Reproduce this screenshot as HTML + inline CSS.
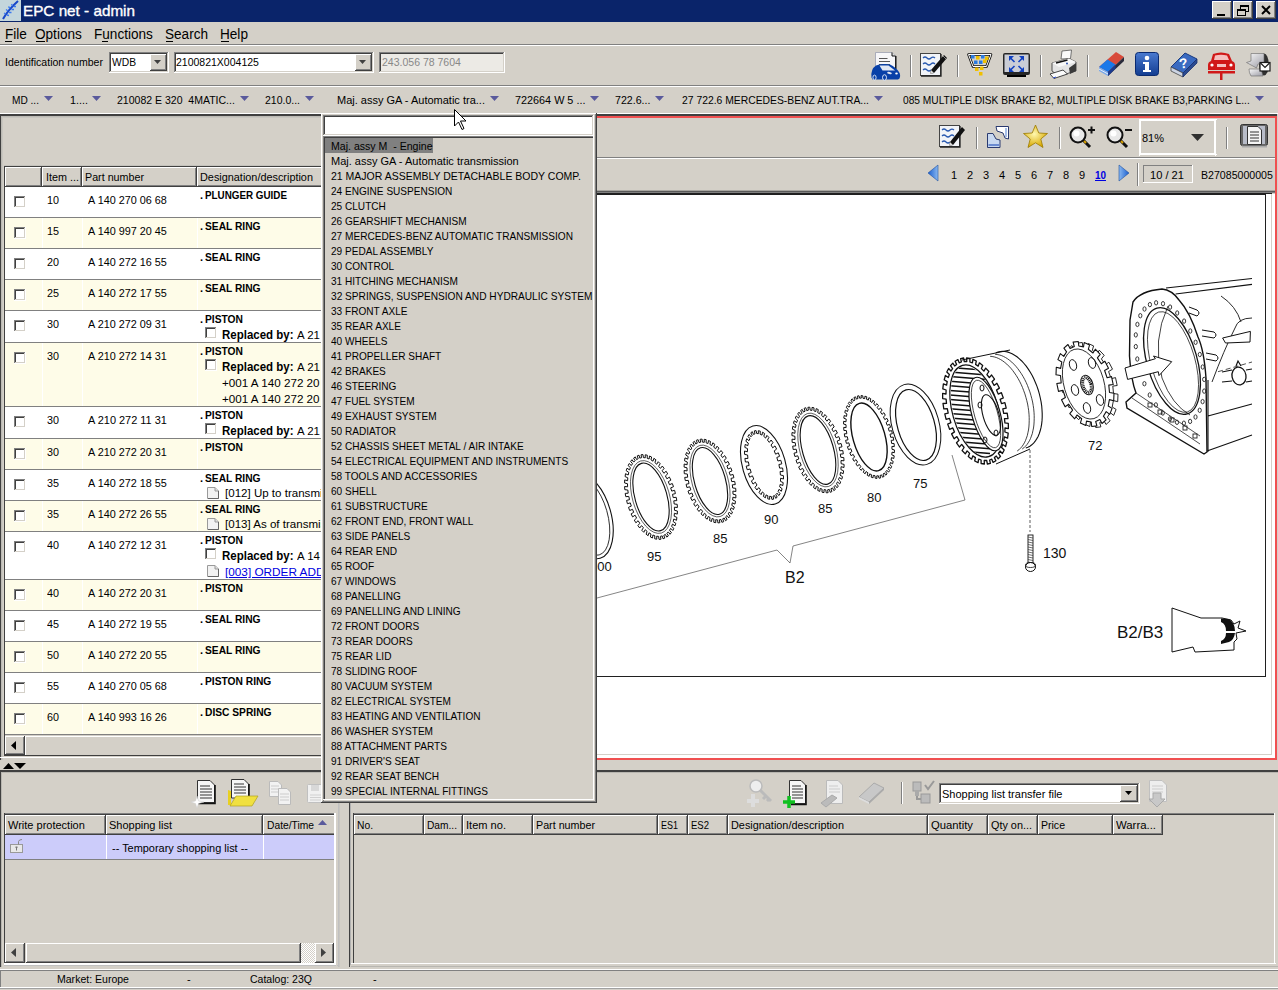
<!DOCTYPE html>
<html><head><meta charset="utf-8"><title>EPC net - admin</title>
<style>
*{box-sizing:border-box;margin:0;padding:0}
html,body{width:1278px;height:990px;overflow:hidden;background:#d4d0c8;font-family:"Liberation Sans",sans-serif;font-size:11px;color:#000;position:relative}
.a{position:absolute}
.t{position:absolute;white-space:pre;line-height:1;transform-origin:0 0}
svg.a{overflow:visible}
</style></head><body>
<div class="a" style="left:0px;top:0px;width:1278px;height:22px;background:#0a246a;"></div>
<div class="a" style="left:0px;top:0px;width:21px;height:21px;background:#c4d6dc;"></div>
<svg class="a" style="left:0px;top:0px;" width="21" height="21" viewBox="0 0 21 21"><path d="M3 19 Q8 10 18 1" stroke="#1848c8" stroke-width="2" fill="none"/><path d="M6 14 l-2 -1 M8 11 l-2 -1.5 M10 8.5 l-1.5 -2 M12.5 6 l-1 -2 M7 15 l2 0.5 M9 12.5 l2.5 0 M11.5 9.5 l2.5 0 M14 6.5 l2 0" stroke="#3a78f0" stroke-width="1.3"/></svg>
<div class="t" style="left:23px;top:3px;font-size:15px;color:#fff;transform:scaleX(1.0176);-webkit-text-stroke:0.35px #fff;">EPC net - admin</div>
<div class="a" style="left:1212px;top:1px;width:20px;height:18px;background:#d4d0c8;"></div>
<div class="a" style="left:1212px;top:1px;width:20px;height:1px;background:#fff;"></div>
<div class="a" style="left:1212px;top:1px;width:1px;height:18px;background:#fff;"></div>
<div class="a" style="left:1212px;top:18px;width:20px;height:1px;background:#404040;"></div>
<div class="a" style="left:1231px;top:1px;width:1px;height:18px;background:#404040;"></div>
<div class="a" style="left:1213px;top:17px;width:18px;height:1px;background:#808080;"></div>
<div class="a" style="left:1230px;top:2px;width:1px;height:16px;background:#808080;"></div>
<div class="a" style="left:1213px;top:2px;width:0px;height:1px;background:#fff;"></div>
<div class="a" style="left:1233px;top:1px;width:20px;height:18px;background:#d4d0c8;"></div>
<div class="a" style="left:1233px;top:1px;width:20px;height:1px;background:#fff;"></div>
<div class="a" style="left:1233px;top:1px;width:1px;height:18px;background:#fff;"></div>
<div class="a" style="left:1233px;top:18px;width:20px;height:1px;background:#404040;"></div>
<div class="a" style="left:1252px;top:1px;width:1px;height:18px;background:#404040;"></div>
<div class="a" style="left:1234px;top:17px;width:18px;height:1px;background:#808080;"></div>
<div class="a" style="left:1251px;top:2px;width:1px;height:16px;background:#808080;"></div>
<div class="a" style="left:1234px;top:2px;width:0px;height:1px;background:#fff;"></div>
<div class="a" style="left:1256px;top:1px;width:20px;height:18px;background:#d4d0c8;"></div>
<div class="a" style="left:1256px;top:1px;width:20px;height:1px;background:#fff;"></div>
<div class="a" style="left:1256px;top:1px;width:1px;height:18px;background:#fff;"></div>
<div class="a" style="left:1256px;top:18px;width:20px;height:1px;background:#404040;"></div>
<div class="a" style="left:1275px;top:1px;width:1px;height:18px;background:#404040;"></div>
<div class="a" style="left:1257px;top:17px;width:18px;height:1px;background:#808080;"></div>
<div class="a" style="left:1274px;top:2px;width:1px;height:16px;background:#808080;"></div>
<div class="a" style="left:1257px;top:2px;width:0px;height:1px;background:#fff;"></div>
<svg class="a" style="left:1212px;top:1px;" width="20" height="18" viewBox="0 0 20 18"><rect x="5" y="13" width="8" height="2" fill="#000"/></svg>
<svg class="a" style="left:1233px;top:1px;" width="20" height="18" viewBox="0 0 20 18"><rect x="7.5" y="4.5" width="8" height="6" fill="none" stroke="#000"/><rect x="7" y="4" width="9" height="2" fill="#000"/><rect x="4.5" y="8.5" width="8" height="6" fill="#d4d0c8" stroke="#000"/><rect x="4" y="8" width="9" height="2" fill="#000"/></svg>
<svg class="a" style="left:1256px;top:1px;" width="20" height="18" viewBox="0 0 20 18"><path d="M6 5 L14 13 M14 5 L6 13" stroke="#000" stroke-width="2"/></svg>
<div class="t" style="left:5px;top:27px;font-size:14px;color:#000;transform:scaleX(0.9700);">File</div>
<div class="t" style="left:35px;top:27px;font-size:14px;color:#000;transform:scaleX(0.9700);">Options</div>
<div class="t" style="left:94px;top:27px;font-size:14px;color:#000;transform:scaleX(0.9700);">Functions</div>
<div class="t" style="left:165px;top:27px;font-size:14px;color:#000;transform:scaleX(0.9700);">Search</div>
<div class="t" style="left:220px;top:27px;font-size:14px;color:#000;transform:scaleX(0.9700);">Help</div>
<div class="a" style="left:5px;top:41px;width:7px;height:1px;background:#000;"></div>
<div class="a" style="left:36px;top:41px;width:9px;height:1px;background:#000;"></div>
<div class="a" style="left:102px;top:41px;width:6px;height:1px;background:#000;"></div>
<div class="a" style="left:166px;top:41px;width:7px;height:1px;background:#000;"></div>
<div class="a" style="left:221px;top:41px;width:8px;height:1px;background:#000;"></div>
<div class="a" style="left:0px;top:44px;width:1278px;height:1px;background:#808080;"></div>
<div class="a" style="left:0px;top:45px;width:1278px;height:1px;background:#fff;"></div>
<div class="t" style="left:5px;top:57px;font-size:11px;color:#000;transform:scaleX(0.9590);">Identification number</div>
<div class="a" style="left:109px;top:52px;width:60px;height:21px;background:#fff;"></div>
<div class="a" style="left:109px;top:52px;width:60px;height:1px;background:#808080;"></div>
<div class="a" style="left:109px;top:52px;width:1px;height:21px;background:#808080;"></div>
<div class="a" style="left:109px;top:72px;width:60px;height:1px;background:#fff;"></div>
<div class="a" style="left:168px;top:52px;width:1px;height:21px;background:#fff;"></div>
<div class="a" style="left:110px;top:53px;width:58px;height:1px;background:#404040;"></div>
<div class="a" style="left:110px;top:53px;width:1px;height:19px;background:#404040;"></div>
<div class="a" style="left:110px;top:71px;width:58px;height:1px;background:#d4d0c8;"></div>
<div class="a" style="left:167px;top:53px;width:1px;height:19px;background:#d4d0c8;"></div>
<div class="t" style="left:112px;top:57px;font-size:11px;color:#000;transform:scaleX(0.9354);">WDB</div>
<div class="a" style="left:150px;top:54px;width:17px;height:17px;background:#d4d0c8;"></div>
<div class="a" style="left:150px;top:54px;width:17px;height:1px;background:#fff;"></div>
<div class="a" style="left:150px;top:54px;width:1px;height:17px;background:#fff;"></div>
<div class="a" style="left:150px;top:70px;width:17px;height:1px;background:#404040;"></div>
<div class="a" style="left:166px;top:54px;width:1px;height:17px;background:#404040;"></div>
<div class="a" style="left:151px;top:69px;width:15px;height:1px;background:#808080;"></div>
<div class="a" style="left:165px;top:55px;width:1px;height:15px;background:#808080;"></div>
<svg class="a" style="left:154px;top:60px;" width="7" height="4" viewBox="0 0 7 4"><polygon points="0,0 7,0 3.5,4" fill="#404040"/></svg>
<div class="a" style="left:174px;top:52px;width:200px;height:21px;background:#fff;"></div>
<div class="a" style="left:174px;top:52px;width:200px;height:1px;background:#808080;"></div>
<div class="a" style="left:174px;top:52px;width:1px;height:21px;background:#808080;"></div>
<div class="a" style="left:174px;top:72px;width:200px;height:1px;background:#fff;"></div>
<div class="a" style="left:373px;top:52px;width:1px;height:21px;background:#fff;"></div>
<div class="a" style="left:175px;top:53px;width:198px;height:1px;background:#404040;"></div>
<div class="a" style="left:175px;top:53px;width:1px;height:19px;background:#404040;"></div>
<div class="a" style="left:175px;top:71px;width:198px;height:1px;background:#d4d0c8;"></div>
<div class="a" style="left:372px;top:53px;width:1px;height:19px;background:#d4d0c8;"></div>
<div class="t" style="left:176px;top:57px;font-size:11px;color:#000;transform:scaleX(0.9544);">2100821X004125</div>
<div class="a" style="left:355px;top:54px;width:17px;height:17px;background:#d4d0c8;"></div>
<div class="a" style="left:355px;top:54px;width:17px;height:1px;background:#fff;"></div>
<div class="a" style="left:355px;top:54px;width:1px;height:17px;background:#fff;"></div>
<div class="a" style="left:355px;top:70px;width:17px;height:1px;background:#404040;"></div>
<div class="a" style="left:371px;top:54px;width:1px;height:17px;background:#404040;"></div>
<div class="a" style="left:356px;top:69px;width:15px;height:1px;background:#808080;"></div>
<div class="a" style="left:370px;top:55px;width:1px;height:15px;background:#808080;"></div>
<svg class="a" style="left:359px;top:60px;" width="7" height="4" viewBox="0 0 7 4"><polygon points="0,0 7,0 3.5,4" fill="#404040"/></svg>
<div class="a" style="left:379px;top:52px;width:126px;height:21px;background:#eceae5;"></div>
<div class="a" style="left:379px;top:52px;width:126px;height:1px;background:#808080;"></div>
<div class="a" style="left:379px;top:52px;width:1px;height:21px;background:#808080;"></div>
<div class="a" style="left:379px;top:72px;width:126px;height:1px;background:#fff;"></div>
<div class="a" style="left:504px;top:52px;width:1px;height:21px;background:#fff;"></div>
<div class="a" style="left:380px;top:53px;width:124px;height:1px;background:#404040;"></div>
<div class="a" style="left:380px;top:53px;width:1px;height:19px;background:#404040;"></div>
<div class="a" style="left:380px;top:71px;width:124px;height:1px;background:#d4d0c8;"></div>
<div class="a" style="left:503px;top:53px;width:1px;height:19px;background:#d4d0c8;"></div>
<div class="t" style="left:382px;top:57px;font-size:11px;color:#888;transform:scaleX(0.9554);">243.056 78 7604</div>
<div class="a" style="left:0px;top:85px;width:1278px;height:1px;background:#808080;"></div>
<div class="a" style="left:0px;top:86px;width:1278px;height:1px;background:#fff;"></div>
<div class="a" style="left:910px;top:55px;width:1px;height:22px;background:#808080;"></div>
<div class="a" style="left:911px;top:55px;width:1px;height:22px;background:#fff;"></div>
<div class="a" style="left:957px;top:55px;width:1px;height:22px;background:#808080;"></div>
<div class="a" style="left:958px;top:55px;width:1px;height:22px;background:#fff;"></div>
<div class="a" style="left:1040px;top:55px;width:1px;height:22px;background:#808080;"></div>
<div class="a" style="left:1041px;top:55px;width:1px;height:22px;background:#fff;"></div>
<div class="a" style="left:1087px;top:55px;width:1px;height:22px;background:#808080;"></div>
<div class="a" style="left:1088px;top:55px;width:1px;height:22px;background:#fff;"></div>
<div class="t" style="left:12px;top:95px;font-size:11px;color:#000;transform:scaleX(0.9201);">MD ...</div>
<svg class="a" style="left:44px;top:96px;" width="9" height="5" viewBox="0 0 9 5"><polygon points="0,0 9,0 4.5,5" fill="#5a5a9c"/></svg>
<div class="t" style="left:70px;top:95px;font-size:11px;color:#000;transform:scaleX(0.9796);">1....</div>
<svg class="a" style="left:92px;top:96px;" width="9" height="5" viewBox="0 0 9 5"><polygon points="0,0 9,0 4.5,5" fill="#5a5a9c"/></svg>
<div class="t" style="left:117px;top:95px;font-size:11px;color:#000;transform:scaleX(0.9559);">210082 E 320  4MATIC...</div>
<svg class="a" style="left:240px;top:96px;" width="9" height="5" viewBox="0 0 9 5"><polygon points="0,0 9,0 4.5,5" fill="#5a5a9c"/></svg>
<div class="t" style="left:265px;top:95px;font-size:11px;color:#000;transform:scaleX(0.9524);">210.0...</div>
<svg class="a" style="left:305px;top:96px;" width="9" height="5" viewBox="0 0 9 5"><polygon points="0,0 9,0 4.5,5" fill="#5a5a9c"/></svg>
<div class="t" style="left:337px;top:95px;font-size:11px;color:#000;">Maj. assy GA - Automatic tra...</div>
<svg class="a" style="left:490px;top:96px;" width="9" height="5" viewBox="0 0 9 5"><polygon points="0,0 9,0 4.5,5" fill="#5a5a9c"/></svg>
<div class="t" style="left:515px;top:95px;font-size:11px;color:#000;transform:scaleX(0.9843);">722664 W 5 ...</div>
<svg class="a" style="left:590px;top:96px;" width="9" height="5" viewBox="0 0 9 5"><polygon points="0,0 9,0 4.5,5" fill="#5a5a9c"/></svg>
<div class="t" style="left:615px;top:95px;font-size:11px;color:#000;transform:scaleX(0.9660);">722.6...</div>
<svg class="a" style="left:655px;top:96px;" width="9" height="5" viewBox="0 0 9 5"><polygon points="0,0 9,0 4.5,5" fill="#5a5a9c"/></svg>
<div class="t" style="left:682px;top:95px;font-size:11px;color:#000;transform:scaleX(0.9408);">27 722.6 MERCEDES-BENZ AUT.TRA...</div>
<svg class="a" style="left:874px;top:96px;" width="9" height="5" viewBox="0 0 9 5"><polygon points="0,0 9,0 4.5,5" fill="#5a5a9c"/></svg>
<div class="t" style="left:903px;top:95px;font-size:11px;color:#000;transform:scaleX(0.9253);">085 MULTIPLE DISK BRAKE B2, MULTIPLE DISK BRAKE B3,PARKING L...</div>
<svg class="a" style="left:1255px;top:96px;" width="9" height="5" viewBox="0 0 9 5"><polygon points="0,0 9,0 4.5,5" fill="#5a5a9c"/></svg>
<div class="a" style="left:0px;top:113px;width:1278px;height:1px;background:#fff;"></div>
<div class="a" style="left:0px;top:969px;width:1278px;height:1px;background:#fff;"></div>
<div class="a" style="left:0px;top:970px;width:1278px;height:1px;background:#808080;"></div>
<div class="a" style="left:0px;top:971px;width:1px;height:16px;background:#808080;"></div>
<div class="a" style="left:0px;top:987px;width:1278px;height:1px;background:#fff;"></div>
<div class="a" style="left:0px;top:988px;width:1278px;height:1px;background:#a0a0a0;"></div>
<div class="t" style="left:57px;top:974px;font-size:11px;color:#000;transform:scaleX(0.9568);">Market: Europe</div>
<div class="t" style="left:187px;top:974px;font-size:11px;color:#000;">-</div>
<div class="t" style="left:250px;top:974px;font-size:11px;color:#000;transform:scaleX(0.9557);">Catalog: 23Q</div>
<div class="t" style="left:373px;top:974px;font-size:11px;color:#000;">-</div>
<div class="a" style="left:0px;top:114px;width:340px;height:1px;background:#404040;"></div>
<div class="a" style="left:0px;top:115px;width:340px;height:1px;background:#404040;"></div>
<div class="a" style="left:1px;top:116px;width:339px;height:1px;background:#bcbab4;"></div>
<div class="a" style="left:2px;top:117px;width:338px;height:1px;background:#c8c6c0;"></div>
<div class="a" style="left:0px;top:114px;width:1px;height:646px;background:#404040;"></div>
<div class="a" style="left:1px;top:116px;width:1px;height:644px;background:#bcbab4;"></div>
<div class="a" style="left:2px;top:117px;width:1px;height:643px;background:#c8c6c0;"></div>
<div class="a" style="left:4px;top:166px;width:330px;height:590px;background:#d4d0c8;"></div>
<div class="a" style="left:4px;top:165px;width:330px;height:1px;background:#c4c2bc;"></div>
<div class="a" style="left:4px;top:166px;width:330px;height:1px;background:#404040;"></div>
<div class="a" style="left:4px;top:166px;width:1px;height:590px;background:#404040;"></div>
<div class="a" style="left:5px;top:167px;width:37px;height:20px;background:#d4d0c8;"></div>
<div class="a" style="left:5px;top:167px;width:37px;height:1px;background:#fff;"></div>
<div class="a" style="left:5px;top:167px;width:1px;height:20px;background:#fff;"></div>
<div class="a" style="left:5px;top:186px;width:37px;height:1px;background:#404040;"></div>
<div class="a" style="left:41px;top:167px;width:1px;height:20px;background:#404040;"></div>
<div class="a" style="left:6px;top:185px;width:35px;height:1px;background:#808080;"></div>
<div class="a" style="left:40px;top:168px;width:1px;height:18px;background:#808080;"></div>
<div class="a" style="left:42px;top:167px;width:40px;height:20px;background:#d4d0c8;"></div>
<div class="a" style="left:42px;top:167px;width:40px;height:1px;background:#fff;"></div>
<div class="a" style="left:42px;top:167px;width:1px;height:20px;background:#fff;"></div>
<div class="a" style="left:42px;top:186px;width:40px;height:1px;background:#404040;"></div>
<div class="a" style="left:81px;top:167px;width:1px;height:20px;background:#404040;"></div>
<div class="a" style="left:43px;top:185px;width:38px;height:1px;background:#808080;"></div>
<div class="a" style="left:80px;top:168px;width:1px;height:18px;background:#808080;"></div>
<div class="a" style="left:43px;top:167px;width:37px;height:20px;overflow:hidden">
<div class="t" style="left:3px;top:5px;font-size:11px;color:#000;transform:scaleX(0.9805);">Item ...</div>
</div>
<div class="a" style="left:82px;top:167px;width:115px;height:20px;background:#d4d0c8;"></div>
<div class="a" style="left:82px;top:167px;width:115px;height:1px;background:#fff;"></div>
<div class="a" style="left:82px;top:167px;width:1px;height:20px;background:#fff;"></div>
<div class="a" style="left:82px;top:186px;width:115px;height:1px;background:#404040;"></div>
<div class="a" style="left:196px;top:167px;width:1px;height:20px;background:#404040;"></div>
<div class="a" style="left:83px;top:185px;width:113px;height:1px;background:#808080;"></div>
<div class="a" style="left:195px;top:168px;width:1px;height:18px;background:#808080;"></div>
<div class="a" style="left:83px;top:167px;width:112px;height:20px;overflow:hidden">
<div class="t" style="left:2px;top:5px;font-size:11px;color:#000;transform:scaleX(0.9742);">Part number</div>
</div>
<div class="a" style="left:197px;top:167px;width:140px;height:20px;background:#d4d0c8;"></div>
<div class="a" style="left:197px;top:167px;width:140px;height:1px;background:#fff;"></div>
<div class="a" style="left:197px;top:167px;width:1px;height:20px;background:#fff;"></div>
<div class="a" style="left:197px;top:186px;width:140px;height:1px;background:#404040;"></div>
<div class="a" style="left:336px;top:167px;width:1px;height:20px;background:#404040;"></div>
<div class="a" style="left:198px;top:185px;width:138px;height:1px;background:#808080;"></div>
<div class="a" style="left:335px;top:168px;width:1px;height:18px;background:#808080;"></div>
<div class="a" style="left:198px;top:167px;width:137px;height:20px;overflow:hidden">
<div class="t" style="left:2px;top:5px;font-size:11px;color:#000;transform:scaleX(0.9877);">Designation/description</div>
</div>
<div class="a" style="left:5px;top:187px;width:330px;height:30px;background:#fff;overflow:hidden"></div>
<div class="a" style="left:5px;top:217px;width:330px;height:1px;background:#808080;"></div>
<div class="a" style="left:14px;top:196px;width:12px;height:12px;background:#fff;"></div>
<div class="a" style="left:14px;top:196px;width:12px;height:1px;background:#808080;"></div>
<div class="a" style="left:14px;top:196px;width:1px;height:12px;background:#808080;"></div>
<div class="a" style="left:15px;top:197px;width:10px;height:1px;background:#404040;"></div>
<div class="a" style="left:15px;top:197px;width:1px;height:10px;background:#404040;"></div>
<div class="a" style="left:14px;top:207px;width:12px;height:1px;background:#fff;"></div>
<div class="a" style="left:25px;top:196px;width:1px;height:12px;background:#fff;"></div>
<div class="a" style="left:15px;top:206px;width:10px;height:1px;background:#d4d0c8;"></div>
<div class="a" style="left:24px;top:197px;width:1px;height:10px;background:#d4d0c8;"></div>
<div class="t" style="left:47px;top:195px;font-size:11px;color:#000;transform:scaleX(0.9796);">10</div>
<div class="t" style="left:88px;top:195px;font-size:11px;color:#000;transform:scaleX(0.9846);">A 140 270 06 68</div>
<div class="t" style="left:200px;top:190px;font-size:11px;font-weight:bold;color:#000;">.</div>
<div class="t" style="left:205px;top:190px;font-size:11px;font-weight:bold;color:#000;transform:scaleX(0.8940);">PLUNGER GUIDE</div>
<div class="a" style="left:5px;top:218px;width:330px;height:30px;background:#fefce8;overflow:hidden"></div>
<div class="a" style="left:42px;top:218px;width:1px;height:30px;background:#fff;"></div>
<div class="a" style="left:82px;top:218px;width:1px;height:30px;background:#fff;"></div>
<div class="a" style="left:197px;top:218px;width:1px;height:30px;background:#fff;"></div>
<div class="a" style="left:5px;top:248px;width:330px;height:1px;background:#808080;"></div>
<div class="a" style="left:14px;top:227px;width:12px;height:12px;background:#fff;"></div>
<div class="a" style="left:14px;top:227px;width:12px;height:1px;background:#808080;"></div>
<div class="a" style="left:14px;top:227px;width:1px;height:12px;background:#808080;"></div>
<div class="a" style="left:15px;top:228px;width:10px;height:1px;background:#404040;"></div>
<div class="a" style="left:15px;top:228px;width:1px;height:10px;background:#404040;"></div>
<div class="a" style="left:14px;top:238px;width:12px;height:1px;background:#fff;"></div>
<div class="a" style="left:25px;top:227px;width:1px;height:12px;background:#fff;"></div>
<div class="a" style="left:15px;top:237px;width:10px;height:1px;background:#d4d0c8;"></div>
<div class="a" style="left:24px;top:228px;width:1px;height:10px;background:#d4d0c8;"></div>
<div class="t" style="left:47px;top:226px;font-size:11px;color:#000;transform:scaleX(0.9796);">15</div>
<div class="t" style="left:88px;top:226px;font-size:11px;color:#000;transform:scaleX(0.9846);">A 140 997 20 45</div>
<div class="t" style="left:200px;top:221px;font-size:11px;font-weight:bold;color:#000;">.</div>
<div class="t" style="left:205px;top:221px;font-size:11px;font-weight:bold;color:#000;transform:scaleX(0.9300);">SEAL RING</div>
<div class="a" style="left:5px;top:249px;width:330px;height:30px;background:#fff;overflow:hidden"></div>
<div class="a" style="left:5px;top:279px;width:330px;height:1px;background:#808080;"></div>
<div class="a" style="left:14px;top:258px;width:12px;height:12px;background:#fff;"></div>
<div class="a" style="left:14px;top:258px;width:12px;height:1px;background:#808080;"></div>
<div class="a" style="left:14px;top:258px;width:1px;height:12px;background:#808080;"></div>
<div class="a" style="left:15px;top:259px;width:10px;height:1px;background:#404040;"></div>
<div class="a" style="left:15px;top:259px;width:1px;height:10px;background:#404040;"></div>
<div class="a" style="left:14px;top:269px;width:12px;height:1px;background:#fff;"></div>
<div class="a" style="left:25px;top:258px;width:1px;height:12px;background:#fff;"></div>
<div class="a" style="left:15px;top:268px;width:10px;height:1px;background:#d4d0c8;"></div>
<div class="a" style="left:24px;top:259px;width:1px;height:10px;background:#d4d0c8;"></div>
<div class="t" style="left:47px;top:257px;font-size:11px;color:#000;transform:scaleX(0.9796);">20</div>
<div class="t" style="left:88px;top:257px;font-size:11px;color:#000;transform:scaleX(0.9846);">A 140 272 16 55</div>
<div class="t" style="left:200px;top:252px;font-size:11px;font-weight:bold;color:#000;">.</div>
<div class="t" style="left:205px;top:252px;font-size:11px;font-weight:bold;color:#000;transform:scaleX(0.9300);">SEAL RING</div>
<div class="a" style="left:5px;top:280px;width:330px;height:30px;background:#fefce8;overflow:hidden"></div>
<div class="a" style="left:42px;top:280px;width:1px;height:30px;background:#fff;"></div>
<div class="a" style="left:82px;top:280px;width:1px;height:30px;background:#fff;"></div>
<div class="a" style="left:197px;top:280px;width:1px;height:30px;background:#fff;"></div>
<div class="a" style="left:5px;top:310px;width:330px;height:1px;background:#808080;"></div>
<div class="a" style="left:14px;top:289px;width:12px;height:12px;background:#fff;"></div>
<div class="a" style="left:14px;top:289px;width:12px;height:1px;background:#808080;"></div>
<div class="a" style="left:14px;top:289px;width:1px;height:12px;background:#808080;"></div>
<div class="a" style="left:15px;top:290px;width:10px;height:1px;background:#404040;"></div>
<div class="a" style="left:15px;top:290px;width:1px;height:10px;background:#404040;"></div>
<div class="a" style="left:14px;top:300px;width:12px;height:1px;background:#fff;"></div>
<div class="a" style="left:25px;top:289px;width:1px;height:12px;background:#fff;"></div>
<div class="a" style="left:15px;top:299px;width:10px;height:1px;background:#d4d0c8;"></div>
<div class="a" style="left:24px;top:290px;width:1px;height:10px;background:#d4d0c8;"></div>
<div class="t" style="left:47px;top:288px;font-size:11px;color:#000;transform:scaleX(0.9796);">25</div>
<div class="t" style="left:88px;top:288px;font-size:11px;color:#000;transform:scaleX(0.9846);">A 140 272 17 55</div>
<div class="t" style="left:200px;top:283px;font-size:11px;font-weight:bold;color:#000;">.</div>
<div class="t" style="left:205px;top:283px;font-size:11px;font-weight:bold;color:#000;transform:scaleX(0.9300);">SEAL RING</div>
<div class="a" style="left:5px;top:311px;width:330px;height:31px;background:#fff;overflow:hidden"></div>
<div class="a" style="left:5px;top:342px;width:330px;height:1px;background:#808080;"></div>
<div class="a" style="left:14px;top:320px;width:12px;height:12px;background:#fff;"></div>
<div class="a" style="left:14px;top:320px;width:12px;height:1px;background:#808080;"></div>
<div class="a" style="left:14px;top:320px;width:1px;height:12px;background:#808080;"></div>
<div class="a" style="left:15px;top:321px;width:10px;height:1px;background:#404040;"></div>
<div class="a" style="left:15px;top:321px;width:1px;height:10px;background:#404040;"></div>
<div class="a" style="left:14px;top:331px;width:12px;height:1px;background:#fff;"></div>
<div class="a" style="left:25px;top:320px;width:1px;height:12px;background:#fff;"></div>
<div class="a" style="left:15px;top:330px;width:10px;height:1px;background:#d4d0c8;"></div>
<div class="a" style="left:24px;top:321px;width:1px;height:10px;background:#d4d0c8;"></div>
<div class="t" style="left:47px;top:319px;font-size:11px;color:#000;transform:scaleX(0.9796);">30</div>
<div class="t" style="left:88px;top:319px;font-size:11px;color:#000;transform:scaleX(0.9846);">A 210 272 09 31</div>
<div class="t" style="left:200px;top:314px;font-size:11px;font-weight:bold;color:#000;">.</div>
<div class="t" style="left:205px;top:314px;font-size:11px;font-weight:bold;color:#000;transform:scaleX(0.9300);">PISTON</div>
<div class="a" style="left:205px;top:327px;width:12px;height:12px;background:#fff;"></div>
<div class="a" style="left:205px;top:327px;width:12px;height:1px;background:#808080;"></div>
<div class="a" style="left:205px;top:327px;width:1px;height:12px;background:#808080;"></div>
<div class="a" style="left:206px;top:328px;width:10px;height:1px;background:#404040;"></div>
<div class="a" style="left:206px;top:328px;width:1px;height:10px;background:#404040;"></div>
<div class="a" style="left:205px;top:338px;width:12px;height:1px;background:#fff;"></div>
<div class="a" style="left:216px;top:327px;width:1px;height:12px;background:#fff;"></div>
<div class="a" style="left:206px;top:337px;width:10px;height:1px;background:#d4d0c8;"></div>
<div class="a" style="left:215px;top:328px;width:1px;height:10px;background:#d4d0c8;"></div>
<div class="t" style="left:222px;top:329px;font-size:12px;font-weight:bold;color:#000;transform:scaleX(0.9575);">Replaced by:</div>
<div class="t" style="left:297px;top:330px;font-size:11px;color:#000;transform:scaleX(1.0432);">A 21</div>
<div class="a" style="left:5px;top:343px;width:330px;height:63px;background:#fefce8;overflow:hidden"></div>
<div class="a" style="left:42px;top:343px;width:1px;height:63px;background:#fff;"></div>
<div class="a" style="left:82px;top:343px;width:1px;height:63px;background:#fff;"></div>
<div class="a" style="left:197px;top:343px;width:1px;height:63px;background:#fff;"></div>
<div class="a" style="left:5px;top:406px;width:330px;height:1px;background:#808080;"></div>
<div class="a" style="left:14px;top:352px;width:12px;height:12px;background:#fff;"></div>
<div class="a" style="left:14px;top:352px;width:12px;height:1px;background:#808080;"></div>
<div class="a" style="left:14px;top:352px;width:1px;height:12px;background:#808080;"></div>
<div class="a" style="left:15px;top:353px;width:10px;height:1px;background:#404040;"></div>
<div class="a" style="left:15px;top:353px;width:1px;height:10px;background:#404040;"></div>
<div class="a" style="left:14px;top:363px;width:12px;height:1px;background:#fff;"></div>
<div class="a" style="left:25px;top:352px;width:1px;height:12px;background:#fff;"></div>
<div class="a" style="left:15px;top:362px;width:10px;height:1px;background:#d4d0c8;"></div>
<div class="a" style="left:24px;top:353px;width:1px;height:10px;background:#d4d0c8;"></div>
<div class="t" style="left:47px;top:351px;font-size:11px;color:#000;transform:scaleX(0.9796);">30</div>
<div class="t" style="left:88px;top:351px;font-size:11px;color:#000;transform:scaleX(0.9846);">A 210 272 14 31</div>
<div class="t" style="left:200px;top:346px;font-size:11px;font-weight:bold;color:#000;">.</div>
<div class="t" style="left:205px;top:346px;font-size:11px;font-weight:bold;color:#000;transform:scaleX(0.9300);">PISTON</div>
<div class="a" style="left:205px;top:359px;width:12px;height:12px;background:#fff;"></div>
<div class="a" style="left:205px;top:359px;width:12px;height:1px;background:#808080;"></div>
<div class="a" style="left:205px;top:359px;width:1px;height:12px;background:#808080;"></div>
<div class="a" style="left:206px;top:360px;width:10px;height:1px;background:#404040;"></div>
<div class="a" style="left:206px;top:360px;width:1px;height:10px;background:#404040;"></div>
<div class="a" style="left:205px;top:370px;width:12px;height:1px;background:#fff;"></div>
<div class="a" style="left:216px;top:359px;width:1px;height:12px;background:#fff;"></div>
<div class="a" style="left:206px;top:369px;width:10px;height:1px;background:#d4d0c8;"></div>
<div class="a" style="left:215px;top:360px;width:1px;height:10px;background:#d4d0c8;"></div>
<div class="t" style="left:222px;top:361px;font-size:12px;font-weight:bold;color:#000;transform:scaleX(0.9575);">Replaced by:</div>
<div class="t" style="left:297px;top:362px;font-size:11px;color:#000;transform:scaleX(1.0432);">A 21</div>
<div class="t" style="left:222px;top:378px;font-size:11px;color:#000;transform:scaleX(1.0600);">+001 A 140 272 20 55</div>
<div class="t" style="left:222px;top:394px;font-size:11px;color:#000;transform:scaleX(1.0600);">+001 A 140 272 20 55</div>
<div class="a" style="left:5px;top:407px;width:330px;height:31px;background:#fff;overflow:hidden"></div>
<div class="a" style="left:5px;top:438px;width:330px;height:1px;background:#808080;"></div>
<div class="a" style="left:14px;top:416px;width:12px;height:12px;background:#fff;"></div>
<div class="a" style="left:14px;top:416px;width:12px;height:1px;background:#808080;"></div>
<div class="a" style="left:14px;top:416px;width:1px;height:12px;background:#808080;"></div>
<div class="a" style="left:15px;top:417px;width:10px;height:1px;background:#404040;"></div>
<div class="a" style="left:15px;top:417px;width:1px;height:10px;background:#404040;"></div>
<div class="a" style="left:14px;top:427px;width:12px;height:1px;background:#fff;"></div>
<div class="a" style="left:25px;top:416px;width:1px;height:12px;background:#fff;"></div>
<div class="a" style="left:15px;top:426px;width:10px;height:1px;background:#d4d0c8;"></div>
<div class="a" style="left:24px;top:417px;width:1px;height:10px;background:#d4d0c8;"></div>
<div class="t" style="left:47px;top:415px;font-size:11px;color:#000;transform:scaleX(0.9796);">30</div>
<div class="t" style="left:88px;top:415px;font-size:11px;color:#000;transform:scaleX(0.9947);">A 210 272 11 31</div>
<div class="t" style="left:200px;top:410px;font-size:11px;font-weight:bold;color:#000;">.</div>
<div class="t" style="left:205px;top:410px;font-size:11px;font-weight:bold;color:#000;transform:scaleX(0.9300);">PISTON</div>
<div class="a" style="left:205px;top:423px;width:12px;height:12px;background:#fff;"></div>
<div class="a" style="left:205px;top:423px;width:12px;height:1px;background:#808080;"></div>
<div class="a" style="left:205px;top:423px;width:1px;height:12px;background:#808080;"></div>
<div class="a" style="left:206px;top:424px;width:10px;height:1px;background:#404040;"></div>
<div class="a" style="left:206px;top:424px;width:1px;height:10px;background:#404040;"></div>
<div class="a" style="left:205px;top:434px;width:12px;height:1px;background:#fff;"></div>
<div class="a" style="left:216px;top:423px;width:1px;height:12px;background:#fff;"></div>
<div class="a" style="left:206px;top:433px;width:10px;height:1px;background:#d4d0c8;"></div>
<div class="a" style="left:215px;top:424px;width:1px;height:10px;background:#d4d0c8;"></div>
<div class="t" style="left:222px;top:425px;font-size:12px;font-weight:bold;color:#000;transform:scaleX(0.9575);">Replaced by:</div>
<div class="t" style="left:297px;top:426px;font-size:11px;color:#000;transform:scaleX(1.0432);">A 21</div>
<div class="a" style="left:5px;top:439px;width:330px;height:30px;background:#fefce8;overflow:hidden"></div>
<div class="a" style="left:42px;top:439px;width:1px;height:30px;background:#fff;"></div>
<div class="a" style="left:82px;top:439px;width:1px;height:30px;background:#fff;"></div>
<div class="a" style="left:197px;top:439px;width:1px;height:30px;background:#fff;"></div>
<div class="a" style="left:5px;top:469px;width:330px;height:1px;background:#808080;"></div>
<div class="a" style="left:14px;top:448px;width:12px;height:12px;background:#fff;"></div>
<div class="a" style="left:14px;top:448px;width:12px;height:1px;background:#808080;"></div>
<div class="a" style="left:14px;top:448px;width:1px;height:12px;background:#808080;"></div>
<div class="a" style="left:15px;top:449px;width:10px;height:1px;background:#404040;"></div>
<div class="a" style="left:15px;top:449px;width:1px;height:10px;background:#404040;"></div>
<div class="a" style="left:14px;top:459px;width:12px;height:1px;background:#fff;"></div>
<div class="a" style="left:25px;top:448px;width:1px;height:12px;background:#fff;"></div>
<div class="a" style="left:15px;top:458px;width:10px;height:1px;background:#d4d0c8;"></div>
<div class="a" style="left:24px;top:449px;width:1px;height:10px;background:#d4d0c8;"></div>
<div class="t" style="left:47px;top:447px;font-size:11px;color:#000;transform:scaleX(0.9796);">30</div>
<div class="t" style="left:88px;top:447px;font-size:11px;color:#000;transform:scaleX(0.9846);">A 210 272 20 31</div>
<div class="t" style="left:200px;top:442px;font-size:11px;font-weight:bold;color:#000;">.</div>
<div class="t" style="left:205px;top:442px;font-size:11px;font-weight:bold;color:#000;transform:scaleX(0.9300);">PISTON</div>
<div class="a" style="left:5px;top:470px;width:330px;height:30px;background:#fff;overflow:hidden"></div>
<div class="a" style="left:5px;top:500px;width:330px;height:1px;background:#808080;"></div>
<div class="a" style="left:14px;top:479px;width:12px;height:12px;background:#fff;"></div>
<div class="a" style="left:14px;top:479px;width:12px;height:1px;background:#808080;"></div>
<div class="a" style="left:14px;top:479px;width:1px;height:12px;background:#808080;"></div>
<div class="a" style="left:15px;top:480px;width:10px;height:1px;background:#404040;"></div>
<div class="a" style="left:15px;top:480px;width:1px;height:10px;background:#404040;"></div>
<div class="a" style="left:14px;top:490px;width:12px;height:1px;background:#fff;"></div>
<div class="a" style="left:25px;top:479px;width:1px;height:12px;background:#fff;"></div>
<div class="a" style="left:15px;top:489px;width:10px;height:1px;background:#d4d0c8;"></div>
<div class="a" style="left:24px;top:480px;width:1px;height:10px;background:#d4d0c8;"></div>
<div class="t" style="left:47px;top:478px;font-size:11px;color:#000;transform:scaleX(0.9796);">35</div>
<div class="t" style="left:88px;top:478px;font-size:11px;color:#000;transform:scaleX(0.9846);">A 140 272 18 55</div>
<div class="t" style="left:200px;top:473px;font-size:11px;font-weight:bold;color:#000;">.</div>
<div class="t" style="left:205px;top:473px;font-size:11px;font-weight:bold;color:#000;transform:scaleX(0.9300);">SEAL RING</div>
<svg class="a" style="left:206px;top:487px;" width="13" height="12" viewBox="0 0 13 12"><path d="M1.5 0.5 H9 L12.5 4 V11.5 H1.5 Z" fill="#f2f2f2" stroke="#9a9a9a"/><path d="M9 0.5 V4 H12.5" fill="#ddd" stroke="#9a9a9a"/><path d="M12.5 4 V11.5 H2" fill="none" stroke="#666"/></svg>
<div class="t" style="left:225px;top:488px;font-size:11px;color:#000;transform:scaleX(1.0500);">[012] Up to transmission</div>
<div class="a" style="left:5px;top:501px;width:330px;height:30px;background:#fefce8;overflow:hidden"></div>
<div class="a" style="left:42px;top:501px;width:1px;height:30px;background:#fff;"></div>
<div class="a" style="left:82px;top:501px;width:1px;height:30px;background:#fff;"></div>
<div class="a" style="left:197px;top:501px;width:1px;height:30px;background:#fff;"></div>
<div class="a" style="left:5px;top:531px;width:330px;height:1px;background:#808080;"></div>
<div class="a" style="left:14px;top:510px;width:12px;height:12px;background:#fff;"></div>
<div class="a" style="left:14px;top:510px;width:12px;height:1px;background:#808080;"></div>
<div class="a" style="left:14px;top:510px;width:1px;height:12px;background:#808080;"></div>
<div class="a" style="left:15px;top:511px;width:10px;height:1px;background:#404040;"></div>
<div class="a" style="left:15px;top:511px;width:1px;height:10px;background:#404040;"></div>
<div class="a" style="left:14px;top:521px;width:12px;height:1px;background:#fff;"></div>
<div class="a" style="left:25px;top:510px;width:1px;height:12px;background:#fff;"></div>
<div class="a" style="left:15px;top:520px;width:10px;height:1px;background:#d4d0c8;"></div>
<div class="a" style="left:24px;top:511px;width:1px;height:10px;background:#d4d0c8;"></div>
<div class="t" style="left:47px;top:509px;font-size:11px;color:#000;transform:scaleX(0.9796);">35</div>
<div class="t" style="left:88px;top:509px;font-size:11px;color:#000;transform:scaleX(0.9846);">A 140 272 26 55</div>
<div class="t" style="left:200px;top:504px;font-size:11px;font-weight:bold;color:#000;">.</div>
<div class="t" style="left:205px;top:504px;font-size:11px;font-weight:bold;color:#000;transform:scaleX(0.9300);">SEAL RING</div>
<svg class="a" style="left:206px;top:518px;" width="13" height="12" viewBox="0 0 13 12"><path d="M1.5 0.5 H9 L12.5 4 V11.5 H1.5 Z" fill="#f2f2f2" stroke="#9a9a9a"/><path d="M9 0.5 V4 H12.5" fill="#ddd" stroke="#9a9a9a"/><path d="M12.5 4 V11.5 H2" fill="none" stroke="#666"/></svg>
<div class="t" style="left:225px;top:519px;font-size:11px;color:#000;transform:scaleX(1.0500);">[013] As of transmission</div>
<div class="a" style="left:5px;top:532px;width:330px;height:47px;background:#fff;overflow:hidden"></div>
<div class="a" style="left:5px;top:579px;width:330px;height:1px;background:#808080;"></div>
<div class="a" style="left:14px;top:541px;width:12px;height:12px;background:#fff;"></div>
<div class="a" style="left:14px;top:541px;width:12px;height:1px;background:#808080;"></div>
<div class="a" style="left:14px;top:541px;width:1px;height:12px;background:#808080;"></div>
<div class="a" style="left:15px;top:542px;width:10px;height:1px;background:#404040;"></div>
<div class="a" style="left:15px;top:542px;width:1px;height:10px;background:#404040;"></div>
<div class="a" style="left:14px;top:552px;width:12px;height:1px;background:#fff;"></div>
<div class="a" style="left:25px;top:541px;width:1px;height:12px;background:#fff;"></div>
<div class="a" style="left:15px;top:551px;width:10px;height:1px;background:#d4d0c8;"></div>
<div class="a" style="left:24px;top:542px;width:1px;height:10px;background:#d4d0c8;"></div>
<div class="t" style="left:47px;top:540px;font-size:11px;color:#000;transform:scaleX(0.9796);">40</div>
<div class="t" style="left:88px;top:540px;font-size:11px;color:#000;transform:scaleX(0.9846);">A 140 272 12 31</div>
<div class="t" style="left:200px;top:535px;font-size:11px;font-weight:bold;color:#000;">.</div>
<div class="t" style="left:205px;top:535px;font-size:11px;font-weight:bold;color:#000;transform:scaleX(0.9300);">PISTON</div>
<div class="a" style="left:205px;top:548px;width:12px;height:12px;background:#fff;"></div>
<div class="a" style="left:205px;top:548px;width:12px;height:1px;background:#808080;"></div>
<div class="a" style="left:205px;top:548px;width:1px;height:12px;background:#808080;"></div>
<div class="a" style="left:206px;top:549px;width:10px;height:1px;background:#404040;"></div>
<div class="a" style="left:206px;top:549px;width:1px;height:10px;background:#404040;"></div>
<div class="a" style="left:205px;top:559px;width:12px;height:1px;background:#fff;"></div>
<div class="a" style="left:216px;top:548px;width:1px;height:12px;background:#fff;"></div>
<div class="a" style="left:206px;top:558px;width:10px;height:1px;background:#d4d0c8;"></div>
<div class="a" style="left:215px;top:549px;width:1px;height:10px;background:#d4d0c8;"></div>
<div class="t" style="left:222px;top:550px;font-size:12px;font-weight:bold;color:#000;transform:scaleX(0.9575);">Replaced by:</div>
<div class="t" style="left:297px;top:551px;font-size:11px;color:#000;transform:scaleX(1.0432);">A 14</div>
<svg class="a" style="left:206px;top:565px;" width="13" height="12" viewBox="0 0 13 12"><path d="M1.5 0.5 H9 L12.5 4 V11.5 H1.5 Z" fill="#f2f2f2" stroke="#9a9a9a"/><path d="M9 0.5 V4 H12.5" fill="#ddd" stroke="#9a9a9a"/><path d="M12.5 4 V11.5 H2" fill="none" stroke="#666"/></svg>
<div class="t" style="left:225px;top:567px;font-size:11px;color:#0000e0;transform:scaleX(1.0700);text-decoration:underline;">[003] ORDER ADDITIONAL</div>
<div class="a" style="left:5px;top:580px;width:330px;height:30px;background:#fefce8;overflow:hidden"></div>
<div class="a" style="left:42px;top:580px;width:1px;height:30px;background:#fff;"></div>
<div class="a" style="left:82px;top:580px;width:1px;height:30px;background:#fff;"></div>
<div class="a" style="left:197px;top:580px;width:1px;height:30px;background:#fff;"></div>
<div class="a" style="left:5px;top:610px;width:330px;height:1px;background:#808080;"></div>
<div class="a" style="left:14px;top:589px;width:12px;height:12px;background:#fff;"></div>
<div class="a" style="left:14px;top:589px;width:12px;height:1px;background:#808080;"></div>
<div class="a" style="left:14px;top:589px;width:1px;height:12px;background:#808080;"></div>
<div class="a" style="left:15px;top:590px;width:10px;height:1px;background:#404040;"></div>
<div class="a" style="left:15px;top:590px;width:1px;height:10px;background:#404040;"></div>
<div class="a" style="left:14px;top:600px;width:12px;height:1px;background:#fff;"></div>
<div class="a" style="left:25px;top:589px;width:1px;height:12px;background:#fff;"></div>
<div class="a" style="left:15px;top:599px;width:10px;height:1px;background:#d4d0c8;"></div>
<div class="a" style="left:24px;top:590px;width:1px;height:10px;background:#d4d0c8;"></div>
<div class="t" style="left:47px;top:588px;font-size:11px;color:#000;transform:scaleX(0.9796);">40</div>
<div class="t" style="left:88px;top:588px;font-size:11px;color:#000;transform:scaleX(0.9846);">A 140 272 20 31</div>
<div class="t" style="left:200px;top:583px;font-size:11px;font-weight:bold;color:#000;">.</div>
<div class="t" style="left:205px;top:583px;font-size:11px;font-weight:bold;color:#000;transform:scaleX(0.9300);">PISTON</div>
<div class="a" style="left:5px;top:611px;width:330px;height:30px;background:#fff;overflow:hidden"></div>
<div class="a" style="left:5px;top:641px;width:330px;height:1px;background:#808080;"></div>
<div class="a" style="left:14px;top:620px;width:12px;height:12px;background:#fff;"></div>
<div class="a" style="left:14px;top:620px;width:12px;height:1px;background:#808080;"></div>
<div class="a" style="left:14px;top:620px;width:1px;height:12px;background:#808080;"></div>
<div class="a" style="left:15px;top:621px;width:10px;height:1px;background:#404040;"></div>
<div class="a" style="left:15px;top:621px;width:1px;height:10px;background:#404040;"></div>
<div class="a" style="left:14px;top:631px;width:12px;height:1px;background:#fff;"></div>
<div class="a" style="left:25px;top:620px;width:1px;height:12px;background:#fff;"></div>
<div class="a" style="left:15px;top:630px;width:10px;height:1px;background:#d4d0c8;"></div>
<div class="a" style="left:24px;top:621px;width:1px;height:10px;background:#d4d0c8;"></div>
<div class="t" style="left:47px;top:619px;font-size:11px;color:#000;transform:scaleX(0.9796);">45</div>
<div class="t" style="left:88px;top:619px;font-size:11px;color:#000;transform:scaleX(0.9846);">A 140 272 19 55</div>
<div class="t" style="left:200px;top:614px;font-size:11px;font-weight:bold;color:#000;">.</div>
<div class="t" style="left:205px;top:614px;font-size:11px;font-weight:bold;color:#000;transform:scaleX(0.9300);">SEAL RING</div>
<div class="a" style="left:5px;top:642px;width:330px;height:30px;background:#fefce8;overflow:hidden"></div>
<div class="a" style="left:42px;top:642px;width:1px;height:30px;background:#fff;"></div>
<div class="a" style="left:82px;top:642px;width:1px;height:30px;background:#fff;"></div>
<div class="a" style="left:197px;top:642px;width:1px;height:30px;background:#fff;"></div>
<div class="a" style="left:5px;top:672px;width:330px;height:1px;background:#808080;"></div>
<div class="a" style="left:14px;top:651px;width:12px;height:12px;background:#fff;"></div>
<div class="a" style="left:14px;top:651px;width:12px;height:1px;background:#808080;"></div>
<div class="a" style="left:14px;top:651px;width:1px;height:12px;background:#808080;"></div>
<div class="a" style="left:15px;top:652px;width:10px;height:1px;background:#404040;"></div>
<div class="a" style="left:15px;top:652px;width:1px;height:10px;background:#404040;"></div>
<div class="a" style="left:14px;top:662px;width:12px;height:1px;background:#fff;"></div>
<div class="a" style="left:25px;top:651px;width:1px;height:12px;background:#fff;"></div>
<div class="a" style="left:15px;top:661px;width:10px;height:1px;background:#d4d0c8;"></div>
<div class="a" style="left:24px;top:652px;width:1px;height:10px;background:#d4d0c8;"></div>
<div class="t" style="left:47px;top:650px;font-size:11px;color:#000;transform:scaleX(0.9796);">50</div>
<div class="t" style="left:88px;top:650px;font-size:11px;color:#000;transform:scaleX(0.9846);">A 140 272 20 55</div>
<div class="t" style="left:200px;top:645px;font-size:11px;font-weight:bold;color:#000;">.</div>
<div class="t" style="left:205px;top:645px;font-size:11px;font-weight:bold;color:#000;transform:scaleX(0.9300);">SEAL RING</div>
<div class="a" style="left:5px;top:673px;width:330px;height:30px;background:#fff;overflow:hidden"></div>
<div class="a" style="left:5px;top:703px;width:330px;height:1px;background:#808080;"></div>
<div class="a" style="left:14px;top:682px;width:12px;height:12px;background:#fff;"></div>
<div class="a" style="left:14px;top:682px;width:12px;height:1px;background:#808080;"></div>
<div class="a" style="left:14px;top:682px;width:1px;height:12px;background:#808080;"></div>
<div class="a" style="left:15px;top:683px;width:10px;height:1px;background:#404040;"></div>
<div class="a" style="left:15px;top:683px;width:1px;height:10px;background:#404040;"></div>
<div class="a" style="left:14px;top:693px;width:12px;height:1px;background:#fff;"></div>
<div class="a" style="left:25px;top:682px;width:1px;height:12px;background:#fff;"></div>
<div class="a" style="left:15px;top:692px;width:10px;height:1px;background:#d4d0c8;"></div>
<div class="a" style="left:24px;top:683px;width:1px;height:10px;background:#d4d0c8;"></div>
<div class="t" style="left:47px;top:681px;font-size:11px;color:#000;transform:scaleX(0.9796);">55</div>
<div class="t" style="left:88px;top:681px;font-size:11px;color:#000;transform:scaleX(0.9846);">A 140 270 05 68</div>
<div class="t" style="left:200px;top:676px;font-size:11px;font-weight:bold;color:#000;">.</div>
<div class="t" style="left:205px;top:676px;font-size:11px;font-weight:bold;color:#000;transform:scaleX(0.9300);">PISTON RING</div>
<div class="a" style="left:5px;top:704px;width:330px;height:30px;background:#fefce8;overflow:hidden"></div>
<div class="a" style="left:42px;top:704px;width:1px;height:30px;background:#fff;"></div>
<div class="a" style="left:82px;top:704px;width:1px;height:30px;background:#fff;"></div>
<div class="a" style="left:197px;top:704px;width:1px;height:30px;background:#fff;"></div>
<div class="a" style="left:5px;top:734px;width:330px;height:1px;background:#808080;"></div>
<div class="a" style="left:14px;top:713px;width:12px;height:12px;background:#fff;"></div>
<div class="a" style="left:14px;top:713px;width:12px;height:1px;background:#808080;"></div>
<div class="a" style="left:14px;top:713px;width:1px;height:12px;background:#808080;"></div>
<div class="a" style="left:15px;top:714px;width:10px;height:1px;background:#404040;"></div>
<div class="a" style="left:15px;top:714px;width:1px;height:10px;background:#404040;"></div>
<div class="a" style="left:14px;top:724px;width:12px;height:1px;background:#fff;"></div>
<div class="a" style="left:25px;top:713px;width:1px;height:12px;background:#fff;"></div>
<div class="a" style="left:15px;top:723px;width:10px;height:1px;background:#d4d0c8;"></div>
<div class="a" style="left:24px;top:714px;width:1px;height:10px;background:#d4d0c8;"></div>
<div class="t" style="left:47px;top:712px;font-size:11px;color:#000;transform:scaleX(0.9796);">60</div>
<div class="t" style="left:88px;top:712px;font-size:11px;color:#000;transform:scaleX(0.9846);">A 140 993 16 26</div>
<div class="t" style="left:200px;top:707px;font-size:11px;font-weight:bold;color:#000;">.</div>
<div class="t" style="left:205px;top:707px;font-size:11px;font-weight:bold;color:#000;transform:scaleX(0.9300);">DISC SPRING</div>
<div class="a" style="left:5px;top:736px;width:330px;height:19px;background:#d4d0c8;"></div>
<div class="a" style="left:5px;top:736px;width:20px;height:19px;background:#d4d0c8;"></div>
<div class="a" style="left:5px;top:736px;width:20px;height:1px;background:#fff;"></div>
<div class="a" style="left:5px;top:736px;width:1px;height:19px;background:#fff;"></div>
<div class="a" style="left:5px;top:754px;width:20px;height:1px;background:#404040;"></div>
<div class="a" style="left:24px;top:736px;width:1px;height:19px;background:#404040;"></div>
<div class="a" style="left:6px;top:753px;width:18px;height:1px;background:#808080;"></div>
<div class="a" style="left:23px;top:737px;width:1px;height:17px;background:#808080;"></div>
<svg class="a" style="left:11px;top:741px;" width="6" height="10" viewBox="0 0 6 10"><polygon points="5,0 5,9 0,4.5" fill="#000"/></svg>
<div class="a" style="left:25px;top:736px;width:310px;height:19px;background:#d4d0c8;"></div>
<div class="a" style="left:25px;top:736px;width:1px;height:19px;background:#fff;"></div>
<div class="a" style="left:25px;top:736px;width:310px;height:1px;background:#fff;"></div>
<div class="a" style="left:4px;top:755px;width:330px;height:1px;background:#404040;"></div>
<div class="a" style="left:0px;top:757px;width:340px;height:1px;background:#fff;"></div>
<svg class="a" style="left:3px;top:763px;" width="11" height="6" viewBox="0 0 11 6"><polygon points="0,6 11,6 5.5,0" fill="#000"/></svg>
<svg class="a" style="left:14px;top:763px;" width="12" height="6" viewBox="0 0 12 6"><polygon points="0,0 12,0 6.0,6" fill="#000"/></svg>
<div class="a" style="left:596px;top:114px;width:682px;height:1px;background:#404040;"></div>
<div class="a" style="left:596px;top:115px;width:682px;height:1px;background:#404040;"></div>
<div class="a" style="left:596px;top:116px;width:681px;height:2px;background:#f05050;"></div>
<div class="a" style="left:1275px;top:116px;width:2px;height:644px;background:#f05050;"></div>
<div class="a" style="left:596px;top:758px;width:681px;height:2px;background:#f05050;"></div>
<div class="a" style="left:1277px;top:114px;width:1px;height:646px;background:#d4d0c8;"></div>
<div class="a" style="left:597px;top:157px;width:678px;height:1px;background:#808080;"></div>
<div class="a" style="left:597px;top:158px;width:678px;height:1px;background:#fff;"></div>
<div class="a" style="left:597px;top:190px;width:678px;height:1px;background:#a8a6a0;"></div>
<div class="a" style="left:597px;top:191px;width:678px;height:1px;background:#5a5a5a;"></div>
<div class="a" style="left:597px;top:192px;width:678px;height:1px;background:#808080;"></div>
<div class="a" style="left:597px;top:193px;width:675px;height:1px;background:#202020;"></div>
<div class="a" style="left:597px;top:194px;width:678px;height:564px;background:#fff;"></div>
<div class="a" style="left:1271px;top:194px;width:1px;height:561px;background:#d4d0c8;"></div>
<div class="a" style="left:597px;top:754px;width:675px;height:1px;background:#d4d0c8;"></div>
<div class="a" style="left:1265px;top:194px;width:1px;height:483px;background:#202020;"></div>
<div class="a" style="left:597px;top:676px;width:669px;height:1px;background:#202020;"></div>
<div class="a" style="left:597px;top:194px;width:669px;height:1px;background:#202020;"></div>
<div class="a" style="left:976px;top:127px;width:1px;height:22px;background:#808080;"></div>
<div class="a" style="left:977px;top:127px;width:1px;height:22px;background:#fff;"></div>
<div class="a" style="left:1059px;top:127px;width:1px;height:22px;background:#808080;"></div>
<div class="a" style="left:1060px;top:127px;width:1px;height:22px;background:#fff;"></div>
<div class="a" style="left:1226px;top:127px;width:1px;height:22px;background:#808080;"></div>
<div class="a" style="left:1227px;top:127px;width:1px;height:22px;background:#fff;"></div>
<div class="a" style="left:1139px;top:119px;width:78px;height:37px;background:#d4d0c8;"></div>
<div class="a" style="left:1139px;top:119px;width:78px;height:1px;background:#fff;"></div>
<div class="a" style="left:1139px;top:119px;width:1px;height:37px;background:#fff;"></div>
<div class="a" style="left:1139px;top:154px;width:78px;height:1px;background:#fff;"></div>
<div class="a" style="left:1215px;top:119px;width:1px;height:37px;background:#fff;"></div>
<div class="a" style="left:1140px;top:120px;width:76px;height:1px;background:#fff;"></div>
<div class="a" style="left:1140px;top:120px;width:1px;height:35px;background:#fff;"></div>
<div class="a" style="left:1140px;top:153px;width:76px;height:1px;background:#fff;"></div>
<div class="a" style="left:1214px;top:120px;width:1px;height:35px;background:#fff;"></div>
<div class="t" style="left:1142px;top:133px;font-size:11px;color:#000;">81%</div>
<svg class="a" style="left:1191px;top:134px;" width="13" height="7" viewBox="0 0 13 7"><polygon points="0,0 13,0 6.5,7" fill="#303030"/></svg>
<svg class="a" style="left:928px;top:165px;" width="11" height="17" viewBox="0 0 11 17"><defs><linearGradient id="ga" x1="0" x2="1"><stop offset="0" stop-color="#1a5fd0"/><stop offset="1" stop-color="#8ab8f0"/></linearGradient></defs><polygon points="10,0 10,16 0,8" fill="url(#ga)" stroke="#2050a0" stroke-width="0.6"/></svg>
<svg class="a" style="left:1119px;top:165px;" width="11" height="17" viewBox="0 0 11 17"><defs><linearGradient id="gb" x1="1" x2="0"><stop offset="0" stop-color="#1a5fd0"/><stop offset="1" stop-color="#8ab8f0"/></linearGradient></defs><polygon points="0,0 0,16 10,8" fill="url(#gb)" stroke="#2050a0" stroke-width="0.6"/></svg>
<div class="t" style="left:951px;top:170px;font-size:11px;color:#000;">1</div>
<div class="t" style="left:967px;top:170px;font-size:11px;color:#000;">2</div>
<div class="t" style="left:983px;top:170px;font-size:11px;color:#000;">3</div>
<div class="t" style="left:999px;top:170px;font-size:11px;color:#000;">4</div>
<div class="t" style="left:1015px;top:170px;font-size:11px;color:#000;">5</div>
<div class="t" style="left:1031px;top:170px;font-size:11px;color:#000;">6</div>
<div class="t" style="left:1047px;top:170px;font-size:11px;color:#000;">7</div>
<div class="t" style="left:1063px;top:170px;font-size:11px;color:#000;">8</div>
<div class="t" style="left:1079px;top:170px;font-size:11px;color:#000;">9</div>
<div class="t" style="left:1095px;top:170px;font-size:11px;font-weight:bold;color:#0000e0;transform:scaleX(0.8980);text-decoration:underline;">10</div>
<div class="a" style="left:1137px;top:163px;width:1px;height:23px;background:#808080;"></div>
<div class="a" style="left:1138px;top:163px;width:1px;height:23px;background:#fff;"></div>
<div class="a" style="left:1143px;top:165px;width:50px;height:18px;background:#d4d0c8;"></div>
<div class="a" style="left:1143px;top:165px;width:50px;height:1px;background:#808080;"></div>
<div class="a" style="left:1143px;top:165px;width:1px;height:18px;background:#808080;"></div>
<div class="a" style="left:1143px;top:182px;width:50px;height:1px;background:#fff;"></div>
<div class="a" style="left:1192px;top:165px;width:1px;height:18px;background:#fff;"></div>
<div class="t" style="left:1150px;top:170px;font-size:11px;color:#000;transform:scaleX(1.0093);">10 / 21</div>
<div class="t" style="left:1201px;top:170px;font-size:11px;color:#000;transform:scaleX(0.9636);">B27085000005</div>
<div class="a" style="left:0px;top:770px;width:1278px;height:1px;background:#404040;"></div>
<div class="a" style="left:0px;top:771px;width:1278px;height:1px;background:#404040;"></div>
<div class="a" style="left:0px;top:772px;width:1278px;height:1px;background:#b8b6b0;"></div>
<div class="a" style="left:0px;top:770px;width:1px;height:197px;background:#404040;"></div>
<div class="a" style="left:1px;top:772px;width:1px;height:195px;background:#b8b6b0;"></div>
<div class="a" style="left:4px;top:813px;width:332px;height:151px;background:#d4d0c8;"></div>
<div class="a" style="left:4px;top:813px;width:332px;height:1px;background:#808080;"></div>
<div class="a" style="left:4px;top:814px;width:332px;height:1px;background:#404040;"></div>
<div class="a" style="left:4px;top:813px;width:1px;height:151px;background:#404040;"></div>
<div class="a" style="left:5px;top:815px;width:101px;height:20px;background:#d4d0c8;"></div>
<div class="a" style="left:5px;top:815px;width:101px;height:1px;background:#fff;"></div>
<div class="a" style="left:5px;top:815px;width:1px;height:20px;background:#fff;"></div>
<div class="a" style="left:5px;top:834px;width:101px;height:1px;background:#404040;"></div>
<div class="a" style="left:105px;top:815px;width:1px;height:20px;background:#404040;"></div>
<div class="a" style="left:6px;top:833px;width:99px;height:1px;background:#808080;"></div>
<div class="a" style="left:104px;top:816px;width:1px;height:18px;background:#808080;"></div>
<div class="a" style="left:6px;top:815px;width:98px;height:20px;overflow:hidden">
<div class="t" style="left:2px;top:5px;font-size:11px;color:#000;">Write protection</div>
</div>
<div class="a" style="left:106px;top:815px;width:157px;height:20px;background:#d4d0c8;"></div>
<div class="a" style="left:106px;top:815px;width:157px;height:1px;background:#fff;"></div>
<div class="a" style="left:106px;top:815px;width:1px;height:20px;background:#fff;"></div>
<div class="a" style="left:106px;top:834px;width:157px;height:1px;background:#404040;"></div>
<div class="a" style="left:262px;top:815px;width:1px;height:20px;background:#404040;"></div>
<div class="a" style="left:107px;top:833px;width:155px;height:1px;background:#808080;"></div>
<div class="a" style="left:261px;top:816px;width:1px;height:18px;background:#808080;"></div>
<div class="a" style="left:107px;top:815px;width:154px;height:20px;overflow:hidden">
<div class="t" style="left:2px;top:5px;font-size:11px;color:#000;">Shopping list</div>
</div>
<div class="a" style="left:263px;top:815px;width:74px;height:20px;background:#d4d0c8;"></div>
<div class="a" style="left:263px;top:815px;width:74px;height:1px;background:#fff;"></div>
<div class="a" style="left:263px;top:815px;width:1px;height:20px;background:#fff;"></div>
<div class="a" style="left:263px;top:834px;width:74px;height:1px;background:#404040;"></div>
<div class="a" style="left:336px;top:815px;width:1px;height:20px;background:#404040;"></div>
<div class="a" style="left:264px;top:833px;width:72px;height:1px;background:#808080;"></div>
<div class="a" style="left:335px;top:816px;width:1px;height:18px;background:#808080;"></div>
<div class="a" style="left:264px;top:815px;width:71px;height:20px;overflow:hidden">
<div class="t" style="left:3px;top:5px;font-size:11px;color:#000;transform:scaleX(0.9336);">Date/Time</div>
</div>
<div class="a" style="left:4px;top:963px;width:332px;height:1px;background:#fff;"></div>
<div class="a" style="left:4px;top:964px;width:332px;height:1px;background:#fff;"></div>
<div class="a" style="left:4px;top:965px;width:334px;height:1px;background:#c0c0c0;"></div>
<div class="a" style="left:334px;top:813px;width:1px;height:152px;background:#fff;"></div>
<div class="a" style="left:335px;top:813px;width:1px;height:152px;background:#fff;"></div>
<div class="a" style="left:336px;top:772px;width:1px;height:195px;background:#d4d0c8;"></div>
<div class="a" style="left:336px;top:813px;width:2px;height:152px;background:#d4d0c8;"></div>
<svg class="a" style="left:318px;top:820px;" width="9" height="5" viewBox="0 0 9 5"><polygon points="0,5 9,5 4.5,0" fill="#5a5a9c"/></svg>
<div class="a" style="left:5px;top:835px;width:329px;height:24px;background:#ccccfa;"></div>
<div class="a" style="left:106px;top:835px;width:1px;height:24px;background:#fff;"></div>
<div class="a" style="left:263px;top:835px;width:1px;height:24px;background:#fff;"></div>
<div class="a" style="left:5px;top:859px;width:329px;height:1px;background:#808080;"></div>
<div class="t" style="left:112px;top:843px;font-size:11px;color:#000;transform:scaleX(0.9944);">-- Temporary shopping list --</div>
<svg class="a" style="left:9px;top:839px;" width="16" height="15" viewBox="0 0 16 15"><rect x="1.5" y="5.5" width="12" height="8" fill="#e8e8e8" stroke="#999"/><path d="M9.5 5.5 V2.5 Q10 0.5 13 0.5" fill="none" stroke="#888"/><rect x="6.5" y="7.5" width="2" height="1.5" fill="#777"/><rect x="7" y="9" width="1" height="2.5" fill="#777"/></svg>
<div class="a" style="left:5px;top:943px;width:329px;height:20px;background:#d4d0c8;"></div>
<div class="a" style="left:5px;top:943px;width:20px;height:20px;background:#d4d0c8;"></div>
<div class="a" style="left:5px;top:943px;width:20px;height:1px;background:#fff;"></div>
<div class="a" style="left:5px;top:943px;width:1px;height:20px;background:#fff;"></div>
<div class="a" style="left:5px;top:962px;width:20px;height:1px;background:#404040;"></div>
<div class="a" style="left:24px;top:943px;width:1px;height:20px;background:#404040;"></div>
<div class="a" style="left:6px;top:961px;width:18px;height:1px;background:#808080;"></div>
<div class="a" style="left:23px;top:944px;width:1px;height:18px;background:#808080;"></div>
<svg class="a" style="left:11px;top:948px;" width="6" height="10" viewBox="0 0 6 10"><polygon points="5,0 5,9 0,4.5" fill="#404040"/></svg>
<div class="a" style="left:26px;top:943px;width:275px;height:20px;background:#d4d0c8;"></div>
<div class="a" style="left:26px;top:943px;width:275px;height:1px;background:#fff;"></div>
<div class="a" style="left:26px;top:943px;width:1px;height:20px;background:#fff;"></div>
<div class="a" style="left:26px;top:962px;width:275px;height:1px;background:#404040;"></div>
<div class="a" style="left:300px;top:943px;width:1px;height:20px;background:#404040;"></div>
<div class="a" style="left:27px;top:961px;width:273px;height:1px;background:#808080;"></div>
<div class="a" style="left:299px;top:944px;width:1px;height:18px;background:#808080;"></div>
<div class="a" style="left:301px;top:943px;width:14px;height:20px;background:#ece9e4;background:repeating-conic-gradient(#fff 0 25%,#d4d0c8 0 50%) 0 0/2px 2px;"></div>
<div class="a" style="left:315px;top:943px;width:19px;height:20px;background:#d4d0c8;"></div>
<div class="a" style="left:315px;top:943px;width:19px;height:1px;background:#fff;"></div>
<div class="a" style="left:315px;top:943px;width:1px;height:20px;background:#fff;"></div>
<div class="a" style="left:315px;top:962px;width:19px;height:1px;background:#404040;"></div>
<div class="a" style="left:333px;top:943px;width:1px;height:20px;background:#404040;"></div>
<div class="a" style="left:316px;top:961px;width:17px;height:1px;background:#808080;"></div>
<div class="a" style="left:332px;top:944px;width:1px;height:18px;background:#808080;"></div>
<svg class="a" style="left:321px;top:948px;" width="6" height="10" viewBox="0 0 6 10"><polygon points="0,0 0,9 5,4.5" fill="#404040"/></svg>
<div class="a" style="left:338px;top:772px;width:1px;height:195px;background:#c0c0c0;"></div>
<div class="a" style="left:339px;top:772px;width:1px;height:195px;background:#c8c6c0;"></div>
<div class="a" style="left:349px;top:772px;width:1px;height:195px;background:#404040;"></div>
<div class="a" style="left:350px;top:772px;width:1px;height:193px;background:#b0b0b0;"></div>
<div class="a" style="left:352px;top:813px;width:923px;height:151px;background:#d4d0c8;"></div>
<div class="a" style="left:353px;top:813px;width:922px;height:1px;background:#808080;"></div>
<div class="a" style="left:353px;top:814px;width:922px;height:1px;background:#404040;"></div>
<div class="a" style="left:353px;top:813px;width:1px;height:150px;background:#404040;"></div>
<div class="a" style="left:351px;top:963px;width:925px;height:1px;background:#fff;"></div>
<div class="a" style="left:1274px;top:813px;width:1px;height:151px;background:#fff;"></div>
<div class="a" style="left:351px;top:966px;width:927px;height:1px;background:#b8b6b0;"></div>
<div class="a" style="left:354px;top:815px;width:70px;height:20px;background:#d4d0c8;"></div>
<div class="a" style="left:354px;top:815px;width:70px;height:1px;background:#fff;"></div>
<div class="a" style="left:354px;top:815px;width:1px;height:20px;background:#fff;"></div>
<div class="a" style="left:354px;top:834px;width:70px;height:1px;background:#404040;"></div>
<div class="a" style="left:423px;top:815px;width:1px;height:20px;background:#404040;"></div>
<div class="a" style="left:355px;top:833px;width:68px;height:1px;background:#808080;"></div>
<div class="a" style="left:422px;top:816px;width:1px;height:18px;background:#808080;"></div>
<div class="a" style="left:355px;top:815px;width:67px;height:20px;overflow:hidden">
<div class="t" style="left:2px;top:5px;font-size:11px;color:#000;transform:scaleX(0.9343);">No.</div>
</div>
<div class="a" style="left:424px;top:815px;width:39px;height:20px;background:#d4d0c8;"></div>
<div class="a" style="left:424px;top:815px;width:39px;height:1px;background:#fff;"></div>
<div class="a" style="left:424px;top:815px;width:1px;height:20px;background:#fff;"></div>
<div class="a" style="left:424px;top:834px;width:39px;height:1px;background:#404040;"></div>
<div class="a" style="left:462px;top:815px;width:1px;height:20px;background:#404040;"></div>
<div class="a" style="left:425px;top:833px;width:37px;height:1px;background:#808080;"></div>
<div class="a" style="left:461px;top:816px;width:1px;height:18px;background:#808080;"></div>
<div class="a" style="left:425px;top:815px;width:36px;height:20px;overflow:hidden">
<div class="t" style="left:2px;top:5px;font-size:11px;color:#000;transform:scaleX(0.9257);">Dam...</div>
</div>
<div class="a" style="left:463px;top:815px;width:70px;height:20px;background:#d4d0c8;"></div>
<div class="a" style="left:463px;top:815px;width:70px;height:1px;background:#fff;"></div>
<div class="a" style="left:463px;top:815px;width:1px;height:20px;background:#fff;"></div>
<div class="a" style="left:463px;top:834px;width:70px;height:1px;background:#404040;"></div>
<div class="a" style="left:532px;top:815px;width:1px;height:20px;background:#404040;"></div>
<div class="a" style="left:464px;top:833px;width:68px;height:1px;background:#808080;"></div>
<div class="a" style="left:531px;top:816px;width:1px;height:18px;background:#808080;"></div>
<div class="a" style="left:464px;top:815px;width:67px;height:20px;overflow:hidden">
<div class="t" style="left:2px;top:5px;font-size:11px;color:#000;transform:scaleX(1.0055);">Item no.</div>
</div>
<div class="a" style="left:533px;top:815px;width:125px;height:20px;background:#d4d0c8;"></div>
<div class="a" style="left:533px;top:815px;width:125px;height:1px;background:#fff;"></div>
<div class="a" style="left:533px;top:815px;width:1px;height:20px;background:#fff;"></div>
<div class="a" style="left:533px;top:834px;width:125px;height:1px;background:#404040;"></div>
<div class="a" style="left:657px;top:815px;width:1px;height:20px;background:#404040;"></div>
<div class="a" style="left:534px;top:833px;width:123px;height:1px;background:#808080;"></div>
<div class="a" style="left:656px;top:816px;width:1px;height:18px;background:#808080;"></div>
<div class="a" style="left:534px;top:815px;width:122px;height:20px;overflow:hidden">
<div class="t" style="left:2px;top:5px;font-size:11px;color:#000;transform:scaleX(0.9742);">Part number</div>
</div>
<div class="a" style="left:658px;top:815px;width:30px;height:20px;background:#d4d0c8;"></div>
<div class="a" style="left:658px;top:815px;width:30px;height:1px;background:#fff;"></div>
<div class="a" style="left:658px;top:815px;width:1px;height:20px;background:#fff;"></div>
<div class="a" style="left:658px;top:834px;width:30px;height:1px;background:#404040;"></div>
<div class="a" style="left:687px;top:815px;width:1px;height:20px;background:#404040;"></div>
<div class="a" style="left:659px;top:833px;width:28px;height:1px;background:#808080;"></div>
<div class="a" style="left:686px;top:816px;width:1px;height:18px;background:#808080;"></div>
<div class="a" style="left:659px;top:815px;width:27px;height:20px;overflow:hidden">
<div class="t" style="left:2px;top:5px;font-size:11px;color:#000;transform:scaleX(0.8168);">ES1</div>
</div>
<div class="a" style="left:688px;top:815px;width:40px;height:20px;background:#d4d0c8;"></div>
<div class="a" style="left:688px;top:815px;width:40px;height:1px;background:#fff;"></div>
<div class="a" style="left:688px;top:815px;width:1px;height:20px;background:#fff;"></div>
<div class="a" style="left:688px;top:834px;width:40px;height:1px;background:#404040;"></div>
<div class="a" style="left:727px;top:815px;width:1px;height:20px;background:#404040;"></div>
<div class="a" style="left:689px;top:833px;width:38px;height:1px;background:#808080;"></div>
<div class="a" style="left:726px;top:816px;width:1px;height:18px;background:#808080;"></div>
<div class="a" style="left:689px;top:815px;width:37px;height:20px;overflow:hidden">
<div class="t" style="left:2px;top:5px;font-size:11px;color:#000;transform:scaleX(0.8649);">ES2</div>
</div>
<div class="a" style="left:728px;top:815px;width:200px;height:20px;background:#d4d0c8;"></div>
<div class="a" style="left:728px;top:815px;width:200px;height:1px;background:#fff;"></div>
<div class="a" style="left:728px;top:815px;width:1px;height:20px;background:#fff;"></div>
<div class="a" style="left:728px;top:834px;width:200px;height:1px;background:#404040;"></div>
<div class="a" style="left:927px;top:815px;width:1px;height:20px;background:#404040;"></div>
<div class="a" style="left:729px;top:833px;width:198px;height:1px;background:#808080;"></div>
<div class="a" style="left:926px;top:816px;width:1px;height:18px;background:#808080;"></div>
<div class="a" style="left:729px;top:815px;width:197px;height:20px;overflow:hidden">
<div class="t" style="left:2px;top:5px;font-size:11px;color:#000;transform:scaleX(0.9877);">Designation/description</div>
</div>
<div class="a" style="left:928px;top:815px;width:60px;height:20px;background:#d4d0c8;"></div>
<div class="a" style="left:928px;top:815px;width:60px;height:1px;background:#fff;"></div>
<div class="a" style="left:928px;top:815px;width:1px;height:20px;background:#fff;"></div>
<div class="a" style="left:928px;top:834px;width:60px;height:1px;background:#404040;"></div>
<div class="a" style="left:987px;top:815px;width:1px;height:20px;background:#404040;"></div>
<div class="a" style="left:929px;top:833px;width:58px;height:1px;background:#808080;"></div>
<div class="a" style="left:986px;top:816px;width:1px;height:18px;background:#808080;"></div>
<div class="a" style="left:929px;top:815px;width:57px;height:20px;overflow:hidden">
<div class="t" style="left:2px;top:5px;font-size:11px;color:#000;transform:scaleX(1.0244);">Quantity</div>
</div>
<div class="a" style="left:988px;top:815px;width:50px;height:20px;background:#d4d0c8;"></div>
<div class="a" style="left:988px;top:815px;width:50px;height:1px;background:#fff;"></div>
<div class="a" style="left:988px;top:815px;width:1px;height:20px;background:#fff;"></div>
<div class="a" style="left:988px;top:834px;width:50px;height:1px;background:#404040;"></div>
<div class="a" style="left:1037px;top:815px;width:1px;height:20px;background:#404040;"></div>
<div class="a" style="left:989px;top:833px;width:48px;height:1px;background:#808080;"></div>
<div class="a" style="left:1036px;top:816px;width:1px;height:18px;background:#808080;"></div>
<div class="a" style="left:989px;top:815px;width:47px;height:20px;overflow:hidden">
<div class="t" style="left:2px;top:5px;font-size:11px;color:#000;transform:scaleX(0.9850);">Qty on...</div>
</div>
<div class="a" style="left:1038px;top:815px;width:75px;height:20px;background:#d4d0c8;"></div>
<div class="a" style="left:1038px;top:815px;width:75px;height:1px;background:#fff;"></div>
<div class="a" style="left:1038px;top:815px;width:1px;height:20px;background:#fff;"></div>
<div class="a" style="left:1038px;top:834px;width:75px;height:1px;background:#404040;"></div>
<div class="a" style="left:1112px;top:815px;width:1px;height:20px;background:#404040;"></div>
<div class="a" style="left:1039px;top:833px;width:73px;height:1px;background:#808080;"></div>
<div class="a" style="left:1111px;top:816px;width:1px;height:18px;background:#808080;"></div>
<div class="a" style="left:1039px;top:815px;width:72px;height:20px;overflow:hidden">
<div class="t" style="left:2px;top:5px;font-size:11px;color:#000;transform:scaleX(0.9576);">Price</div>
</div>
<div class="a" style="left:1113px;top:815px;width:50px;height:20px;background:#d4d0c8;"></div>
<div class="a" style="left:1113px;top:815px;width:50px;height:1px;background:#fff;"></div>
<div class="a" style="left:1113px;top:815px;width:1px;height:20px;background:#fff;"></div>
<div class="a" style="left:1113px;top:834px;width:50px;height:1px;background:#404040;"></div>
<div class="a" style="left:1162px;top:815px;width:1px;height:20px;background:#404040;"></div>
<div class="a" style="left:1114px;top:833px;width:48px;height:1px;background:#808080;"></div>
<div class="a" style="left:1161px;top:816px;width:1px;height:18px;background:#808080;"></div>
<div class="a" style="left:1114px;top:815px;width:47px;height:20px;overflow:hidden">
<div class="t" style="left:2px;top:5px;font-size:11px;color:#000;transform:scaleX(1.0331);">Warra...</div>
</div>
<div class="a" style="left:939px;top:783px;width:201px;height:21px;background:#fff;"></div>
<div class="a" style="left:939px;top:783px;width:201px;height:1px;background:#808080;"></div>
<div class="a" style="left:939px;top:783px;width:1px;height:21px;background:#808080;"></div>
<div class="a" style="left:939px;top:803px;width:201px;height:1px;background:#fff;"></div>
<div class="a" style="left:1139px;top:783px;width:1px;height:21px;background:#fff;"></div>
<div class="a" style="left:940px;top:784px;width:199px;height:1px;background:#404040;"></div>
<div class="a" style="left:940px;top:784px;width:1px;height:19px;background:#404040;"></div>
<div class="a" style="left:940px;top:802px;width:199px;height:1px;background:#d4d0c8;"></div>
<div class="a" style="left:1138px;top:784px;width:1px;height:19px;background:#d4d0c8;"></div>
<div class="t" style="left:942px;top:789px;font-size:11px;color:#000;">Shopping list transfer file</div>
<div class="a" style="left:1120px;top:785px;width:18px;height:17px;background:#d4d0c8;"></div>
<div class="a" style="left:1120px;top:785px;width:18px;height:1px;background:#fff;"></div>
<div class="a" style="left:1120px;top:785px;width:1px;height:17px;background:#fff;"></div>
<div class="a" style="left:1120px;top:801px;width:18px;height:1px;background:#404040;"></div>
<div class="a" style="left:1137px;top:785px;width:1px;height:17px;background:#404040;"></div>
<div class="a" style="left:1121px;top:800px;width:16px;height:1px;background:#808080;"></div>
<div class="a" style="left:1136px;top:786px;width:1px;height:15px;background:#808080;"></div>
<svg class="a" style="left:1125px;top:791px;" width="7" height="4" viewBox="0 0 7 4"><polygon points="0,0 7,0 3.5,4" fill="#000"/></svg>
<div class="a" style="left:901px;top:782px;width:1px;height:22px;background:#808080;"></div>
<div class="a" style="left:902px;top:782px;width:1px;height:22px;background:#fff;"></div>
<svg class="a" style="left:597px;top:194px;overflow:hidden;" width="668" height="482" viewBox="0 0 668 482"><ellipse cx="-9.0" cy="322.0" rx="23" ry="44" transform="rotate(-16 -9.0 322.0)" fill="none" stroke="#111" stroke-width="1.1" /><ellipse cx="-9.0" cy="322.0" rx="19.5" ry="40.5" transform="rotate(-16 -9.0 322.0)" fill="none" stroke="#111" stroke-width="0.8" /><path d="M74.7,297.1 L77.6,296.3 L78.4,299.6 L75.5,300.3 L76.2,303.6 L79.2,303.3 L79.8,306.6 L76.8,306.8 L77.2,310.0 L80.2,310.3 L80.4,313.5 L77.4,313.2 L77.5,316.3 L80.4,317.0 L80.3,320.1 L77.4,319.3 L77.2,322.2 L79.9,323.4 L79.5,326.3 L76.8,325.0 L76.2,327.6 L78.8,329.3 L78.0,331.8 L75.5,330.1 L74.6,332.4 L76.9,334.4 L75.8,336.5 L73.7,334.4 L72.5,336.3 L74.4,338.6 L73.0,340.3 L71.3,337.9 L69.9,339.3 L71.4,341.9 L69.7,343.1 L68.4,340.4 L66.8,341.3 L67.8,344.1 L66.0,344.8 L65.2,341.9 L63.4,342.3 L64.0,345.2 L62.0,345.4 L61.6,342.4 L59.7,342.2 L59.8,345.2 L57.7,344.8 L57.8,341.7 L55.9,341.0 L55.5,344.0 L53.4,343.0 L54.0,340.1 L52.0,338.8 L51.1,341.7 L49.1,340.2 L50.1,337.4 L48.2,335.7 L46.8,338.3 L44.8,336.3 L46.4,333.7 L44.5,331.6 L42.7,334.0 L40.9,331.6 L42.8,329.3 L41.1,326.7 L38.9,328.8 L37.3,326.1 L39.6,324.1 L38.1,321.2 L35.6,322.9 L34.1,319.9 L36.7,318.3 L35.5,315.3 L32.7,316.5 L31.5,313.3 L34.3,312.1 L33.3,308.9 L30.4,309.7 L29.6,306.4 L32.5,305.7 L31.8,302.4 L28.8,302.7 L28.2,299.4 L31.2,299.2 L30.8,296.0 L27.8,295.7 L27.6,292.5 L30.6,292.8 L30.5,289.7 L27.6,289.0 L27.7,285.9 L30.6,286.7 L30.8,283.8 L28.1,282.6 L28.5,279.7 L31.2,281.0 L31.8,278.4 L29.2,276.7 L30.0,274.2 L32.5,275.9 L33.4,273.6 L31.1,271.6 L32.2,269.5 L34.3,271.6 L35.5,269.7 L33.6,267.4 L35.0,265.7 L36.7,268.1 L38.1,266.7 L36.6,264.1 L38.3,262.9 L39.6,265.6 L41.2,264.7 L40.2,261.9 L42.0,261.2 L42.8,264.1 L44.6,263.7 L44.0,260.8 L46.0,260.6 L46.4,263.6 L48.3,263.8 L48.2,260.8 L50.3,261.2 L50.2,264.3 L52.1,265.0 L52.5,262.0 L54.6,263.0 L54.0,265.9 L56.0,267.2 L56.9,264.3 L58.9,265.8 L57.9,268.6 L59.8,270.3 L61.2,267.7 L63.2,269.7 L61.6,272.3 L63.5,274.4 L65.3,272.0 L67.1,274.4 L65.2,276.7 L66.9,279.3 L69.1,277.2 L70.7,279.9 L68.4,281.9 L69.9,284.8 L72.4,283.1 L73.9,286.1 L71.3,287.7 L72.5,290.7 L75.3,289.5 L76.5,292.7 L73.7,293.9 Z" fill="none" stroke="#111" stroke-width="1.0" stroke-linejoin="round"/><ellipse cx="54.0" cy="303.0" rx="18.5" ry="37.5" transform="rotate(-16 54.0 303.0)" fill="none" stroke="#111" stroke-width="0.6" /><ellipse cx="54.0" cy="303.0" rx="16" ry="35" transform="rotate(-16 54.0 303.0)" fill="none" stroke="#111" stroke-width="1.1" /><path d="M133.2,281.2 L136.1,280.5 L136.9,283.7 L134.0,284.4 L134.7,287.6 L137.7,287.4 L138.3,290.6 L135.3,290.8 L135.7,294.0 L138.7,294.3 L138.9,297.5 L135.9,297.1 L136.0,300.2 L138.9,300.9 L138.8,304.0 L135.9,303.2 L135.7,306.0 L138.5,307.2 L138.0,310.1 L135.3,308.8 L134.8,311.4 L137.3,313.0 L136.5,315.5 L134.1,313.8 L133.3,316.0 L135.5,318.0 L134.4,320.2 L132.3,318.1 L131.2,319.9 L133.1,322.2 L131.7,323.9 L130.0,321.5 L128.6,322.9 L130.1,325.5 L128.5,326.7 L127.2,324.0 L125.7,324.8 L126.7,327.7 L124.9,328.3 L124.0,325.5 L122.3,325.8 L122.9,328.7 L120.9,328.9 L120.6,325.9 L118.7,325.7 L118.8,328.7 L116.8,328.3 L116.9,325.2 L115.0,324.5 L114.5,327.5 L112.5,326.5 L113.1,323.6 L111.2,322.4 L110.2,325.2 L108.2,323.7 L109.3,320.9 L107.4,319.2 L106.0,321.8 L104.1,319.9 L105.6,317.3 L103.8,315.2 L102.0,317.5 L100.2,315.2 L102.1,312.9 L100.5,310.4 L98.3,312.4 L96.7,309.7 L98.9,307.7 L97.5,305.0 L95.0,306.6 L93.6,303.6 L96.1,302.1 L94.9,299.0 L92.2,300.2 L91.0,297.1 L93.8,295.9 L92.8,292.8 L89.9,293.5 L89.1,290.3 L92.0,289.6 L91.3,286.4 L88.3,286.6 L87.7,283.4 L90.7,283.2 L90.3,280.0 L87.3,279.7 L87.1,276.5 L90.1,276.9 L90.0,273.8 L87.1,273.1 L87.2,270.0 L90.1,270.8 L90.3,268.0 L87.5,266.8 L88.0,263.9 L90.7,265.2 L91.2,262.6 L88.7,261.0 L89.5,258.5 L91.9,260.2 L92.7,258.0 L90.5,256.0 L91.6,253.8 L93.7,255.9 L94.8,254.1 L92.9,251.8 L94.3,250.1 L96.0,252.5 L97.4,251.1 L95.9,248.5 L97.5,247.3 L98.8,250.0 L100.3,249.2 L99.3,246.3 L101.1,245.7 L102.0,248.5 L103.7,248.2 L103.1,245.3 L105.1,245.1 L105.4,248.1 L107.3,248.3 L107.2,245.3 L109.2,245.7 L109.1,248.8 L111.0,249.5 L111.5,246.5 L113.5,247.5 L112.9,250.4 L114.8,251.6 L115.8,248.8 L117.8,250.3 L116.7,253.1 L118.6,254.8 L120.0,252.2 L121.9,254.1 L120.4,256.7 L122.2,258.8 L124.0,256.5 L125.8,258.8 L123.9,261.1 L125.5,263.6 L127.7,261.6 L129.3,264.3 L127.1,266.3 L128.5,269.0 L131.0,267.4 L132.4,270.4 L129.9,271.9 L131.1,275.0 L133.8,273.8 L135.0,276.9 L132.2,278.1 Z" fill="none" stroke="#111" stroke-width="1.0" stroke-linejoin="round"/><ellipse cx="113.0" cy="287.0" rx="18" ry="37" transform="rotate(-16 113.0 287.0)" fill="none" stroke="#111" stroke-width="0.6" /><ellipse cx="113.0" cy="287.0" rx="15.5" ry="34.5" transform="rotate(-16 113.0 287.0)" fill="none" stroke="#111" stroke-width="1.1" /><ellipse cx="167.0" cy="271.0" rx="21.5" ry="40.5" transform="rotate(-16 167.0 271.0)" fill="none" stroke="#111" stroke-width="1.1" /><path d="M180.9,267.0 L183.8,266.3 L184.8,269.9 L181.9,270.5 L182.6,274.1 L185.6,274.0 L186.1,277.6 L183.1,277.5 L183.4,281.0 L186.4,281.6 L186.5,285.0 L183.6,284.2 L183.5,287.4 L186.2,288.6 L185.8,291.6 L183.2,290.3 L182.7,292.9 L185.1,294.7 L184.3,297.3 L182.0,295.3 L181.1,297.4 L183.1,299.7 L181.8,301.6 L180.1,299.2 L178.8,300.6 L180.2,303.2 L178.7,304.3 L177.5,301.6 L176.0,302.2 L176.7,305.1 L174.9,305.4 L174.3,302.5 L172.6,302.3 L172.7,305.3 L170.7,304.8 L170.9,301.8 L169.0,300.9 L168.5,303.8 L166.4,302.5 L167.2,299.6 L165.3,297.9 L164.1,300.6 L162.1,298.6 L163.5,295.9 L161.7,293.6 L159.9,296.0 L158.0,293.3 L160.0,291.0 L158.3,288.2 L156.0,290.1 L154.4,286.9 L156.8,285.1 L155.4,281.8 L152.7,283.2 L151.4,279.7 L154.2,278.5 L153.1,275.0 L150.2,275.7 L149.2,272.1 L152.1,271.5 L151.4,267.9 L148.4,268.0 L147.9,264.4 L150.9,264.5 L150.6,261.0 L147.6,260.4 L147.5,257.0 L150.4,257.8 L150.5,254.6 L147.8,253.4 L148.2,250.4 L150.8,251.7 L151.3,249.1 L148.9,247.3 L149.7,244.7 L152.0,246.7 L152.9,244.6 L150.9,242.3 L152.2,240.4 L153.9,242.8 L155.2,241.4 L153.8,238.8 L155.3,237.7 L156.5,240.4 L158.0,239.8 L157.3,236.9 L159.1,236.6 L159.7,239.5 L161.4,239.7 L161.3,236.7 L163.3,237.2 L163.1,240.2 L165.0,241.1 L165.5,238.2 L167.6,239.5 L166.8,242.4 L168.7,244.1 L169.9,241.4 L171.9,243.4 L170.5,246.1 L172.3,248.4 L174.1,246.0 L176.0,248.7 L174.0,251.0 L175.7,253.8 L178.0,251.9 L179.6,255.1 L177.2,256.9 L178.6,260.2 L181.3,258.8 L182.6,262.3 L179.8,263.5 Z" fill="none" stroke="#111" stroke-width="1.0" stroke-linejoin="round"/><path d="M241.2,250.2 L244.1,249.5 L245.0,252.8 L242.1,253.5 L242.8,256.8 L245.8,256.5 L246.3,259.9 L243.3,260.1 L243.8,263.3 L246.8,263.6 L247.0,266.8 L244.0,266.5 L244.1,269.7 L247.1,270.4 L247.0,273.5 L244.1,272.7 L243.9,275.6 L246.6,276.8 L246.2,279.7 L243.5,278.4 L243.0,281.1 L245.5,282.7 L244.8,285.2 L242.3,283.5 L241.5,285.8 L243.7,287.9 L242.7,290.0 L240.5,287.9 L239.5,289.8 L241.3,292.1 L240.0,293.8 L238.2,291.4 L236.9,292.8 L238.4,295.4 L236.8,296.6 L235.5,293.9 L233.9,294.8 L234.9,297.6 L233.2,298.3 L232.3,295.4 L230.6,295.8 L231.1,298.7 L229.2,298.8 L228.8,295.8 L227.0,295.6 L227.0,298.6 L225.0,298.2 L225.1,295.2 L223.2,294.4 L222.8,297.4 L220.7,296.4 L221.3,293.4 L219.4,292.2 L218.5,295.0 L216.5,293.5 L217.5,290.7 L215.6,288.9 L214.2,291.5 L212.3,289.6 L213.8,287.0 L212.0,284.8 L210.2,287.1 L208.4,284.7 L210.3,282.4 L208.6,279.8 L206.4,281.9 L204.8,279.1 L207.1,277.1 L205.6,274.3 L203.1,275.9 L201.6,272.9 L204.2,271.3 L202.9,268.2 L200.2,269.4 L199.0,266.2 L201.8,265.0 L200.8,261.8 L197.9,262.5 L197.0,259.2 L199.9,258.5 L199.2,255.2 L196.2,255.5 L195.7,252.1 L198.7,251.9 L198.2,248.7 L195.2,248.4 L195.0,245.2 L198.0,245.5 L197.9,242.3 L194.9,241.6 L195.0,238.5 L197.9,239.3 L198.1,236.4 L195.4,235.2 L195.8,232.3 L198.5,233.6 L199.0,230.9 L196.5,229.3 L197.2,226.8 L199.7,228.5 L200.5,226.2 L198.3,224.1 L199.3,222.0 L201.5,224.1 L202.5,222.2 L200.7,219.9 L202.0,218.2 L203.8,220.6 L205.1,219.2 L203.6,216.6 L205.2,215.4 L206.5,218.1 L208.1,217.2 L207.1,214.4 L208.8,213.7 L209.7,216.6 L211.4,216.2 L210.9,213.3 L212.8,213.2 L213.2,216.2 L215.0,216.4 L215.0,213.4 L217.0,213.8 L216.9,216.8 L218.8,217.6 L219.2,214.6 L221.3,215.6 L220.7,218.6 L222.6,219.8 L223.5,217.0 L225.5,218.5 L224.5,221.3 L226.4,223.1 L227.8,220.5 L229.7,222.4 L228.2,225.0 L230.0,227.2 L231.8,224.9 L233.6,227.3 L231.7,229.6 L233.4,232.2 L235.6,230.1 L237.2,232.9 L234.9,234.9 L236.4,237.7 L238.9,236.1 L240.4,239.1 L237.8,240.7 L239.1,243.8 L241.8,242.6 L243.0,245.8 L240.2,247.0 Z" fill="none" stroke="#111" stroke-width="1.0" stroke-linejoin="round"/><ellipse cx="221.0" cy="256.0" rx="18" ry="38" transform="rotate(-16 221.0 256.0)" fill="none" stroke="#111" stroke-width="0.6" /><ellipse cx="221.0" cy="256.0" rx="15.5" ry="35.5" transform="rotate(-16 221.0 256.0)" fill="none" stroke="#111" stroke-width="1.1" /><path d="M292.2,237.2 L294.6,236.6 L295.4,239.7 L293.0,240.2 L293.7,243.3 L296.2,243.1 L296.7,246.2 L294.2,246.3 L294.6,249.4 L297.1,249.5 L297.3,252.6 L294.9,252.4 L295.0,255.3 L297.4,255.9 L297.4,258.7 L295.0,258.2 L294.8,260.9 L297.2,261.8 L296.8,264.5 L294.5,263.6 L294.1,266.1 L296.2,267.4 L295.6,269.8 L293.5,268.5 L292.8,270.7 L294.7,272.3 L293.8,274.4 L291.9,272.8 L291.0,274.6 L292.7,276.5 L291.5,278.2 L289.9,276.3 L288.7,277.8 L290.1,279.9 L288.7,281.2 L287.4,279.0 L286.0,280.1 L287.1,282.4 L285.5,283.2 L284.6,280.9 L283.0,281.5 L283.7,283.9 L282.0,284.2 L281.4,281.8 L279.7,281.9 L280.0,284.4 L278.2,284.2 L278.0,281.7 L276.2,281.4 L276.1,283.8 L274.2,283.2 L274.5,280.7 L272.7,279.9 L272.1,282.3 L270.2,281.2 L270.9,278.8 L269.1,277.5 L268.1,279.8 L266.3,278.3 L267.3,276.0 L265.5,274.3 L264.3,276.4 L262.5,274.5 L263.8,272.4 L262.1,270.3 L260.6,272.2 L258.9,269.9 L260.5,268.0 L259.0,265.6 L257.1,267.3 L255.7,264.7 L257.6,263.1 L256.2,260.4 L254.1,261.7 L252.8,258.9 L254.9,257.6 L253.8,254.7 L251.5,255.7 L250.4,252.7 L252.7,251.8 L251.8,248.8 L249.4,249.4 L248.6,246.3 L251.0,245.8 L250.3,242.7 L247.8,242.9 L247.3,239.8 L249.8,239.7 L249.4,236.6 L246.9,236.5 L246.7,233.4 L249.1,233.6 L249.0,230.7 L246.6,230.1 L246.6,227.3 L249.0,227.8 L249.2,225.1 L246.8,224.2 L247.2,221.5 L249.5,222.4 L249.9,219.9 L247.8,218.6 L248.4,216.2 L250.5,217.5 L251.2,215.3 L249.3,213.7 L250.2,211.6 L252.1,213.2 L253.0,211.4 L251.3,209.5 L252.5,207.8 L254.1,209.7 L255.3,208.2 L253.9,206.1 L255.3,204.8 L256.6,207.0 L258.0,205.9 L256.9,203.6 L258.5,202.8 L259.4,205.1 L261.0,204.5 L260.3,202.1 L262.0,201.8 L262.6,204.2 L264.3,204.1 L264.0,201.6 L265.8,201.8 L266.0,204.3 L267.8,204.6 L267.9,202.2 L269.8,202.8 L269.5,205.3 L271.3,206.1 L271.9,203.7 L273.8,204.8 L273.1,207.2 L274.9,208.5 L275.9,206.2 L277.7,207.7 L276.7,210.0 L278.5,211.7 L279.7,209.6 L281.5,211.5 L280.2,213.6 L281.9,215.7 L283.4,213.8 L285.1,216.1 L283.5,218.0 L285.0,220.4 L286.9,218.7 L288.3,221.3 L286.4,222.9 L287.8,225.6 L289.9,224.3 L291.2,227.1 L289.1,228.4 L290.2,231.3 L292.5,230.3 L293.6,233.3 L291.3,234.2 Z" fill="none" stroke="#111" stroke-width="1.0" stroke-linejoin="round"/><ellipse cx="272.0" cy="243.0" rx="16" ry="35" transform="rotate(-16 272.0 243.0)" fill="none" stroke="#111" stroke-width="1.4" /><ellipse cx="318.5" cy="230.5" rx="23.5" ry="41.5" transform="rotate(-16 318.5 230.5)" fill="none" stroke="#111" stroke-width="1.0" /><ellipse cx="319.0" cy="231.0" rx="18.5" ry="36.5" transform="rotate(-16 319.0 231.0)" fill="none" stroke="#111" stroke-width="1.2" /><text x="-7" y="377" font-size="13" font-family="Liberation Sans" fill="#111">100</text><text x="50" y="367" font-size="13" font-family="Liberation Sans" fill="#111">95</text><text x="116" y="349" font-size="13" font-family="Liberation Sans" fill="#111">85</text><text x="167" y="330" font-size="13" font-family="Liberation Sans" fill="#111">90</text><text x="221" y="319" font-size="13" font-family="Liberation Sans" fill="#111">85</text><text x="270" y="308" font-size="13" font-family="Liberation Sans" fill="#111">80</text><text x="316" y="294" font-size="13" font-family="Liberation Sans" fill="#111">75</text><text x="491" y="256" font-size="13" font-family="Liberation Sans" fill="#111">72</text><text x="446" y="364" font-size="14" font-family="Liberation Sans" fill="#111">130</text><text x="188" y="389" font-size="16" font-family="Liberation Sans" fill="#111">B2</text><text x="520" y="444" font-size="17" font-family="Liberation Sans" fill="#111">B2/B3</text><path d="M0.0,404.0 L180.0,356.0 L193.0,369.0 L196.0,352.0 L368.0,306.0 L355.0,261.0" fill="none" stroke="#333" stroke-width="0.6"/><path d="M398.9,158.8 L401.0,158.0 L403.3,157.5 L405.5,157.3 L407.9,157.5 L410.3,157.9 L412.7,158.7 L415.1,159.8 L417.6,161.2 L420.0,162.8 L422.4,164.8 L424.7,167.0 L427.0,169.5 L429.2,172.2 L431.3,175.1 L433.3,178.3 L435.2,181.6 L436.9,185.0 L438.5,188.7 L440.0,192.4 L441.3,196.2 L442.4,200.1 L443.3,204.0 L444.1,207.9 L444.7,211.8 L445.0,215.7 L445.2,219.5 L445.2,223.2 L445.0,226.9 L444.6,230.3 L444.0,233.7 L443.2,236.8 L442.2,239.7 L441.1,242.5 L439.7,244.9 L438.2,247.2 L436.6,249.1 L434.8,250.8 L432.9,252.2 L430.9,253.3 L428.8,254.1" fill="none" stroke="#111" stroke-width="1.1" /><path d="M398.1,160.3 L400.1,160.5 L402.2,160.9 L404.3,161.5 L406.4,162.4 L408.5,163.5 L410.6,164.8 L412.7,166.4 L414.8,168.1 L416.8,170.1 L418.8,172.2 L420.7,174.5 L422.5,177.0 L424.3,179.6 L426.0,182.4 L427.6,185.3 L429.1,188.3 L430.5,191.5 L431.7,194.7 L432.9,197.9 L433.9,201.3 L434.8,204.7 L435.6,208.0 L436.2,211.4 L436.7,214.8 L437.0,218.2 L437.2,221.5 L437.2,224.7 L437.1,227.9 L436.9,231.0 L436.5,234.0 L435.9,236.8 L435.3,239.6 L434.4,242.1 L433.5,244.5 L432.4,246.8 L431.2,248.8 L429.9,250.7 L428.4,252.3 L426.9,253.8 L425.2,255.0" fill="none" stroke="#111" stroke-width="0.8" /><path d="M393.1,162.3 L395.1,162.5 L397.2,162.9 L399.3,163.5 L401.4,164.4 L403.5,165.5 L405.6,166.8 L407.7,168.4 L409.8,170.1 L411.8,172.1 L413.8,174.2 L415.7,176.5 L417.5,179.0 L419.3,181.6 L421.0,184.4 L422.6,187.3 L424.1,190.3 L425.5,193.5 L426.7,196.7 L427.9,199.9 L428.9,203.3 L429.8,206.7 L430.6,210.0 L431.2,213.4 L431.7,216.8 L432.0,220.2 L432.2,223.5 L432.2,226.7 L432.1,229.9 L431.9,233.0 L431.5,236.0 L430.9,238.8 L430.3,241.6 L429.4,244.1 L428.5,246.5 L427.4,248.8 L426.2,250.8 L424.9,252.7 L423.4,254.3 L421.9,255.8 L420.2,257.0" fill="none" stroke="#111" stroke-width="0.8" /><path d="M365.0,166.0 L413.0,156.0 M399.0,270.0 L433.0,255.0" stroke="#111" stroke-width="1" fill="none"/><path d="M404.5,209.6 L407.9,208.7 L409.2,214.2 L405.8,214.9 L406.7,219.3 L410.2,219.1 L411.0,224.5 L407.5,224.6 L407.9,228.9 L411.3,229.4 L411.4,234.6 L408.0,234.0 L407.9,238.0 L411.2,239.2 L410.6,244.1 L407.4,242.8 L406.8,246.4 L409.8,248.2 L408.6,252.5 L405.7,250.5 L404.6,253.6 L407.2,256.0 L405.4,259.5 L403.0,257.0 L401.4,259.4 L403.5,262.3 L401.2,264.9 L399.3,262.0 L397.4,263.6 L398.9,266.8 L396.1,268.4 L394.8,265.2 L392.6,266.0 L393.4,269.4 L390.4,270.0 L389.7,266.5 L387.2,266.5 L387.4,270.0 L384.1,269.5 L384.1,266.0 L381.6,265.1 L381.1,268.6 L377.7,267.0 L378.4,263.6 L375.8,261.9 L374.6,265.2 L371.3,262.6 L372.6,259.4 L370.1,256.9 L368.3,259.9 L365.1,256.5 L367.1,253.5 L364.7,250.4 L362.4,253.0 L359.5,248.8 L362.0,246.3 L359.9,242.6 L357.1,244.7 L354.6,239.9 L357.5,237.9 L355.8,233.9 L352.6,235.3 L350.7,230.1 L353.9,228.7 L352.5,224.4 L349.1,225.3 L347.8,219.8 L351.2,219.1 L350.3,214.7 L346.8,214.9 L346.0,209.5 L349.5,209.4 L349.1,205.1 L345.7,204.6 L345.6,199.4 L349.0,200.0 L349.1,196.0 L345.8,194.8 L346.4,189.9 L349.6,191.2 L350.2,187.6 L347.2,185.8 L348.4,181.5 L351.3,183.5 L352.4,180.4 L349.8,178.0 L351.6,174.5 L354.0,177.0 L355.6,174.6 L353.5,171.7 L355.8,169.1 L357.7,172.0 L359.6,170.4 L358.1,167.2 L360.9,165.6 L362.2,168.8 L364.4,168.0 L363.6,164.6 L366.6,164.0 L367.3,167.5 L369.8,167.5 L369.6,164.0 L372.9,164.5 L372.9,168.0 L375.4,168.9 L375.9,165.4 L379.3,167.0 L378.6,170.4 L381.2,172.1 L382.4,168.8 L385.7,171.4 L384.4,174.6 L386.9,177.1 L388.7,174.1 L391.9,177.5 L389.9,180.5 L392.3,183.6 L394.6,181.0 L397.5,185.2 L395.0,187.7 L397.1,191.4 L399.9,189.3 L402.4,194.1 L399.5,196.1 L401.2,200.1 L404.4,198.7 L406.3,203.9 L403.1,205.3 Z" fill="none" stroke="#111" stroke-width="1.3" stroke-linejoin="round"/><ellipse cx="378.5" cy="217.0" rx="23" ry="47.5" transform="rotate(-16 378.5 217.0)" fill="none" stroke="#111" stroke-width="1.2" /><defs><clipPath id="hubc"><ellipse cx="378.5" cy="217" rx="22" ry="46.5" transform="rotate(-16 378.5 217)"/></clipPath></defs><g clip-path="url(#hubc)"><path d="M343.0,168.0 L393.0,172.0 M343.0,172.6 L393.0,176.6 M343.0,177.2 L393.0,181.2 M343.0,181.8 L393.0,185.8 M343.0,186.4 L393.0,190.4 M343.0,191.0 L393.0,195.0 M343.0,195.6 L393.0,199.6 M343.0,200.2 L393.0,204.2 M343.0,204.8 L393.0,208.8 M343.0,209.4 L393.0,213.4 M343.0,214.0 L393.0,218.0 M343.0,218.6 L393.0,222.6 M343.0,223.2 L393.0,227.2 M343.0,227.8 L393.0,231.8 M343.0,232.4 L393.0,236.4 M343.0,237.0 L393.0,241.0 M343.0,241.6 L393.0,245.6 M343.0,246.2 L393.0,250.2 M343.0,250.8 L393.0,254.8 M343.0,255.4 L393.0,259.4 M343.0,260.0 L393.0,264.0 M343.0,264.6 L393.0,268.6 " stroke="#111" stroke-width="1.5" fill="none"/></g><ellipse cx="389" cy="220" rx="14" ry="38" transform="rotate(-16 389 220)" fill="#fff" stroke="#111" stroke-width="1.2"/><ellipse cx="389.0" cy="220.0" rx="11.5" ry="35" transform="rotate(-16 389.0 220.0)" fill="none" stroke="#111" stroke-width="0.7" /><ellipse cx="394.0" cy="221.0" rx="8" ry="21" transform="rotate(-16 394.0 221.0)" fill="none" stroke="#111" stroke-width="1.1" /><ellipse cx="385" cy="194" rx="2" ry="3" fill="none" stroke="#111" stroke-width="1"/><ellipse cx="383" cy="211" rx="2" ry="3" fill="none" stroke="#111" stroke-width="1"/><ellipse cx="388" cy="246" rx="2" ry="3" fill="none" stroke="#111" stroke-width="1"/><ellipse cx="399" cy="239" rx="2" ry="3" fill="none" stroke="#111" stroke-width="1"/><g transform="translate(4 1)"><path d="M510.1,183.7 L514.5,182.6 L516.2,190.5 L511.8,191.1 L512.5,198.5 L517.0,199.2 L516.7,206.7 L512.4,205.6 L511.2,212.0 L515.1,214.4 L512.7,220.4 L509.2,217.6 L506.4,222.2 L509.1,225.8 L505.0,229.5 L502.9,225.5 L498.7,227.5 L499.9,231.9 L494.7,232.5 L494.2,228.0 L489.5,227.1 L488.8,231.5 L483.4,229.1 L484.7,224.7 L480.0,221.0 L477.7,224.8 L472.8,219.7 L475.6,216.1 L471.7,210.2 L468.1,212.8 L464.5,205.8 L468.4,203.5 L465.9,196.3 L461.5,197.4 L459.8,189.5 L464.2,188.9 L463.5,181.5 L459.0,180.8 L459.3,173.3 L463.6,174.4 L464.8,168.0 L460.9,165.6 L463.3,159.6 L466.8,162.4 L469.6,157.8 L466.9,154.2 L471.0,150.5 L473.1,154.5 L477.3,152.5 L476.1,148.1 L481.3,147.5 L481.8,152.0 L486.5,152.9 L487.2,148.5 L492.6,150.9 L491.3,155.3 L496.0,159.0 L498.3,155.2 L503.2,160.3 L500.4,163.9 L504.3,169.8 L507.9,167.2 L511.5,174.2 L507.6,176.5 Z" fill="none" stroke="#111" stroke-width="0.9" stroke-linejoin="round"/></g><path d="M510.1,183.7 L514.5,182.6 L516.2,190.5 L511.8,191.1 L512.5,198.5 L517.0,199.2 L516.7,206.7 L512.4,205.6 L511.2,212.0 L515.1,214.4 L512.7,220.4 L509.2,217.6 L506.4,222.2 L509.1,225.8 L505.0,229.5 L502.9,225.5 L498.7,227.5 L499.9,231.9 L494.7,232.5 L494.2,228.0 L489.5,227.1 L488.8,231.5 L483.4,229.1 L484.7,224.7 L480.0,221.0 L477.7,224.8 L472.8,219.7 L475.6,216.1 L471.7,210.2 L468.1,212.8 L464.5,205.8 L468.4,203.5 L465.9,196.3 L461.5,197.4 L459.8,189.5 L464.2,188.9 L463.5,181.5 L459.0,180.8 L459.3,173.3 L463.6,174.4 L464.8,168.0 L460.9,165.6 L463.3,159.6 L466.8,162.4 L469.6,157.8 L466.9,154.2 L471.0,150.5 L473.1,154.5 L477.3,152.5 L476.1,148.1 L481.3,147.5 L481.8,152.0 L486.5,152.9 L487.2,148.5 L492.6,150.9 L491.3,155.3 L496.0,159.0 L498.3,155.2 L503.2,160.3 L500.4,163.9 L504.3,169.8 L507.9,167.2 L511.5,174.2 L507.6,176.5 Z" fill="#fff" stroke="#111" stroke-width="1.1" stroke-linejoin="round"/><ellipse cx="487.0" cy="190.0" rx="20" ry="36" transform="rotate(-16 487.0 190.0)" fill="none" stroke="#111" stroke-width="0.8" /><ellipse cx="476.0" cy="171.0" rx="3.5" ry="5.5" transform="rotate(-16 476.0 171.0)" fill="none" stroke="#111" stroke-width="0.9" /><ellipse cx="478.0" cy="196.0" rx="3.5" ry="5.5" transform="rotate(-16 478.0 196.0)" fill="none" stroke="#111" stroke-width="0.9" /><ellipse cx="490.0" cy="214.0" rx="3.5" ry="5.5" transform="rotate(-16 490.0 214.0)" fill="none" stroke="#111" stroke-width="0.9" /><ellipse cx="495.0" cy="169.0" rx="3.5" ry="5.5" transform="rotate(-16 495.0 169.0)" fill="none" stroke="#111" stroke-width="0.9" /><ellipse cx="503.0" cy="206.0" rx="3.5" ry="5.5" transform="rotate(-16 503.0 206.0)" fill="none" stroke="#111" stroke-width="0.9" /><ellipse cx="490.0" cy="191.0" rx="6" ry="10" transform="rotate(-16 490.0 191.0)" fill="none" stroke="#111" stroke-width="1.0" /><ellipse cx="490.0" cy="191.0" rx="4" ry="7.5" transform="rotate(-16 490.0 191.0)" fill="none" stroke="#111" stroke-width="3" stroke-dasharray="1 0.8"/><path d="M433.0,256.0 L433.0,338.0" stroke="#333" stroke-width="0.8" stroke-dasharray="3 2" fill="none"/><rect x="431" y="341" width="5" height="29" fill="#fff" stroke="#111" stroke-width="0.9"/><path d="M431.0,343.0 L436.0,344.0 M431.0,345.5 L436.0,346.5 M431.0,348.0 L436.0,349.0 M431.0,350.5 L436.0,351.5 M431.0,353.0 L436.0,354.0 M431.0,355.5 L436.0,356.5 M431.0,358.0 L436.0,359.0 M431.0,360.5 L436.0,361.5 M431.0,363.0 L436.0,364.0 M431.0,365.5 L436.0,366.5 M431.0,368.0 L436.0,369.0 " stroke="#333" stroke-width="0.7"/><ellipse cx="433.5" cy="373" rx="5" ry="4.5" fill="#fff" stroke="#111" stroke-width="1"/><ellipse cx="433.5" cy="371" rx="5" ry="2.5" fill="none" stroke="#111" stroke-width="0.8"/><path d="M565.0,95.0 Q543.0,97.0 536.0,108.0 L533.0,126.0 L532.5,162.0 Q534.0,186.0 539.0,199.0 L529.0,208.0 L530.0,214.0 L607.0,260.0 L610.0,258.0 L609.0,184.0 Q607.0,156.0 601.0,143.0 Q593.0,118.0 582.0,106.0 Q575.0,96.0 565.0,95.0 Z" fill="#fff" stroke="#111" stroke-width="1.4"/><ellipse cx="575.0" cy="167.0" rx="25" ry="55" transform="rotate(-16 575.0 167.0)" fill="none" stroke="#111" stroke-width="1.3" /><ellipse cx="576.0" cy="168.0" rx="22" ry="52" transform="rotate(-16 576.0 168.0)" fill="none" stroke="#111" stroke-width="0.7" /><path d="M571.0,112.0 Q555.0,146.0 565.0,184.0 Q575.0,211.0 593.0,221.0" fill="none" stroke="#111" stroke-width="0.8"/><ellipse cx="602.8" cy="160.5" rx="1.6" ry="2.2" fill="none" stroke="#222" stroke-width="0.9"/><ellipse cx="605.7" cy="173.0" rx="1.6" ry="2.2" fill="none" stroke="#222" stroke-width="0.9"/><ellipse cx="607.2" cy="185.4" rx="1.6" ry="2.2" fill="none" stroke="#222" stroke-width="0.9"/><ellipse cx="607.2" cy="197.1" rx="1.6" ry="2.2" fill="none" stroke="#222" stroke-width="0.9"/><ellipse cx="605.6" cy="207.6" rx="1.6" ry="2.2" fill="none" stroke="#222" stroke-width="0.9"/><ellipse cx="602.7" cy="216.3" rx="1.6" ry="2.2" fill="none" stroke="#222" stroke-width="0.9"/><ellipse cx="598.5" cy="223.0" rx="1.6" ry="2.2" fill="none" stroke="#222" stroke-width="0.9"/><ellipse cx="593.1" cy="227.4" rx="1.6" ry="2.2" fill="none" stroke="#222" stroke-width="0.9"/><ellipse cx="586.9" cy="229.2" rx="1.6" ry="2.2" fill="none" stroke="#222" stroke-width="0.9"/><ellipse cx="580.0" cy="228.3" rx="1.6" ry="2.2" fill="none" stroke="#222" stroke-width="0.9"/><ellipse cx="572.9" cy="224.9" rx="1.6" ry="2.2" fill="none" stroke="#222" stroke-width="0.9"/><ellipse cx="565.8" cy="219.0" rx="1.6" ry="2.2" fill="none" stroke="#222" stroke-width="0.9"/><ellipse cx="558.9" cy="210.9" rx="1.6" ry="2.2" fill="none" stroke="#222" stroke-width="0.9"/><ellipse cx="552.7" cy="201.0" rx="1.6" ry="2.2" fill="none" stroke="#222" stroke-width="0.9"/><ellipse cx="547.4" cy="189.7" rx="1.6" ry="2.2" fill="none" stroke="#222" stroke-width="0.9"/><ellipse cx="543.2" cy="177.5" rx="1.6" ry="2.2" fill="none" stroke="#222" stroke-width="0.9"/><ellipse cx="540.3" cy="165.0" rx="1.6" ry="2.2" fill="none" stroke="#222" stroke-width="0.9"/><ellipse cx="538.8" cy="152.6" rx="1.6" ry="2.2" fill="none" stroke="#222" stroke-width="0.9"/><ellipse cx="538.8" cy="140.9" rx="1.6" ry="2.2" fill="none" stroke="#222" stroke-width="0.9"/><ellipse cx="540.4" cy="130.4" rx="1.6" ry="2.2" fill="none" stroke="#222" stroke-width="0.9"/><ellipse cx="543.3" cy="121.7" rx="1.6" ry="2.2" fill="none" stroke="#222" stroke-width="0.9"/><ellipse cx="547.5" cy="115.0" rx="1.6" ry="2.2" fill="none" stroke="#222" stroke-width="0.9"/><ellipse cx="552.9" cy="110.6" rx="1.6" ry="2.2" fill="none" stroke="#222" stroke-width="0.9"/><ellipse cx="559.1" cy="108.8" rx="1.6" ry="2.2" fill="none" stroke="#222" stroke-width="0.9"/><ellipse cx="566.0" cy="109.7" rx="1.6" ry="2.2" fill="none" stroke="#222" stroke-width="0.9"/><ellipse cx="573.1" cy="113.1" rx="1.6" ry="2.2" fill="none" stroke="#222" stroke-width="0.9"/><ellipse cx="580.2" cy="119.0" rx="1.6" ry="2.2" fill="none" stroke="#222" stroke-width="0.9"/><ellipse cx="587.1" cy="127.1" rx="1.6" ry="2.2" fill="none" stroke="#222" stroke-width="0.9"/><ellipse cx="593.3" cy="137.0" rx="1.6" ry="2.2" fill="none" stroke="#222" stroke-width="0.9"/><ellipse cx="598.6" cy="148.3" rx="1.6" ry="2.2" fill="none" stroke="#222" stroke-width="0.9"/><path d="M539.0,199.0 L603.0,242.0 M535.0,204.0 L603.0,250.0" stroke="#222" stroke-width="0.8" fill="none"/><rect x="561" y="216" width="4" height="4" fill="none" stroke="#222" stroke-width="0.9"/><rect x="573" y="224" width="4" height="4" fill="none" stroke="#222" stroke-width="0.9"/><rect x="586" y="232" width="4" height="4" fill="none" stroke="#222" stroke-width="0.9"/><rect x="551" y="209" width="4" height="4" fill="none" stroke="#222" stroke-width="0.9"/><rect x="596" y="240" width="4" height="4" fill="none" stroke="#222" stroke-width="0.9"/><path d="M569.0,94.0 L655.0,84.5 M578.6,100.0 L655.0,90.4 M611.0,222.0 L655.0,210.0 M610.0,257.0 L655.0,241.0 M611.0,186.0 L611.0,258.0" stroke="#111" stroke-width="1.1" fill="none"/><path d="M624.0,102.0 Q639.0,112.0 644.0,128.0 M655.0,124.0 Q641.0,124.0 638.0,134.0 Q627.0,156.0 615.0,188.0" stroke="#111" stroke-width="0.9" fill="none"/><path d="M592.0,113.0 L600.0,116.0 Q604.0,119.0 600.0,122.0 L592.0,119.0" fill="#fff" stroke="#111" stroke-width="1"/><path d="M605.0,136.0 L617.0,138.0 Q621.0,141.0 617.0,144.0 L605.0,142.0" fill="#fff" stroke="#111" stroke-width="1"/><path d="M609.0,159.0 L619.0,161.0 Q623.0,164.0 619.0,167.0 L609.0,165.0" fill="#fff" stroke="#111" stroke-width="1"/><path d="M625.6,144.0 L653.4,137.4 L653.0,148.0 L628.5,149.0 Z" fill="#fff" stroke="#111" stroke-width="1"/><path d="M621.0,177.7 L655.0,168.0" stroke="#222" stroke-width="0.8" stroke-dasharray="5 3"/><ellipse cx="642.0" cy="182.0" rx="7" ry="9" transform="rotate(-10 642.0 182.0)" fill="none" stroke="#111" stroke-width="1.3" /><path d="M625.0,178.0 L635.0,176.0 M625.0,188.0 L635.0,187.0 M649.0,176.0 L655.0,175.0 M649.0,188.0 L655.0,187.0 M639.0,172.0 L641.0,167.0 L644.0,172.0" stroke="#111" stroke-width="1.2" fill="none"/><path d="M528.0,174.0 L558.4,164.7 L556.5,162.0 L574.7,167.7 L562.0,181.6 L561.3,177.7 L530.6,185.4 Z" fill="#fff" stroke="#111" stroke-width="1"/><path d="M575.0,414.0 L575.0,458.0 L596.0,453.0 L598.0,458.0 L637.0,456.0 L637.0,448.0 L640.0,445.0 L639.0,439.0 L649.0,437.0 L641.0,434.0 L643.0,427.0 L637.0,430.0 L634.0,426.0 L625.0,424.0 L604.0,424.0 Z" fill="#fff" stroke="#111" stroke-width="1"/><path d="M624.0,424.5 L632.0,425.0 Q638.0,429.0 638.0,437.0 L629.0,437.0 Q629.0,430.0 624.0,428.0 Z M629.0,439.0 L638.0,439.0 Q637.0,446.0 632.0,448.0 L624.0,450.0 L624.0,447.0 Q629.0,445.0 629.0,439.0 Z" fill="#111"/></svg>
<svg class="a" style="left:870px;top:51px;" width="32" height="30" viewBox="0 0 32 30">
<path d="M5.5 1.5 H22 L25.5 5 V17 H5.5 Z" fill="#f6f6f8" stroke="#9aa0b0" stroke-width="0.8"/>
<path d="M22 1.5 V5 H25.5" fill="#e0e0e0" stroke="#111" stroke-width="1"/>
<path d="M25.8 5 V18" stroke="#111" stroke-width="1.4"/>
<path d="M9 7.5 H17.5 M9 10.5 H20 M9 13.5 H20" stroke="#555" stroke-width="1.1"/>
<path d="M1.5 26.5 Q0.5 18 6 14.5 Q10 12.5 15 13 L20 13.5 Q26 16.5 29 21 Q31 24 29.5 27.5 L28 28.5 L2.5 28.5 Z" fill="#0840a8"/>
<polygon points="9.5,14.5 18.5,14.5 25,19.5 12.5,19.5" fill="#dfe6f2"/>
<ellipse cx="26.5" cy="22.5" rx="1.3" ry="1.1" fill="#fff"/>
<ellipse cx="19.5" cy="22" rx="2.4" ry="1" fill="#dfe6f2" transform="rotate(15 19.5 22)"/>
<ellipse cx="4.5" cy="26.5" rx="1.6" ry="2.4" fill="#0840a8" stroke="#e8eef8" stroke-width="0.9"/>
<ellipse cx="14.5" cy="26.5" rx="2" ry="2.8" fill="#0840a8" stroke="#e8eef8" stroke-width="0.9"/></svg>
<svg class="a" style="left:919px;top:51px;" width="30" height="27" viewBox="0 0 30 27">
<rect x="1.5" y="2.5" width="20" height="22" fill="#f2f4f8" stroke="#444" stroke-width="1"/>
<path d="M22 3 V25 H2" stroke="#222" stroke-width="1.3" fill="none"/>
<path d="M4 7 q2 -2 4 0 t4 0 t4 0 M4 13 q2 -2 4 0 t4 0 t4 0 M4 19 q2 -2 4 0 t4 0" stroke="#2a5ab0" stroke-width="1.2" fill="none"/>
<path d="M12 19 L25 4 L28 7 L15 22 L11 23 Z" fill="#111"/>
<path d="M12 19 L15 22 L11 23 Z" fill="#ddd"/>
<path d="M24 5 L27 8" stroke="#888" stroke-width="1"/></svg>
<svg class="a" style="left:967px;top:53px;" width="26" height="25" viewBox="0 0 26 25">
<path d="M1.5 1.5 H24 L19.5 13.5 H6 Z" fill="none" stroke="#111" stroke-width="2.6" stroke-linejoin="round"/>
<path d="M1.5 1.5 H24 L19.5 13.5 H6 Z" fill="none" stroke="#fff" stroke-width="1"/>
<rect x="4" y="2" width="3.5" height="3.5" fill="#2a7ae0"/><rect x="9" y="3" width="3.5" height="3.5" fill="#f0c000"/>
<rect x="14" y="2" width="3.5" height="3.5" fill="#2a7ae0"/><rect x="18" y="3.5" width="3.5" height="3.5" fill="#f0c000"/>
<rect x="7" y="7.5" width="3.5" height="3.5" fill="#2a7ae0"/><rect x="12" y="7.5" width="3.5" height="3.5" fill="#2a7ae0"/><rect x="16" y="6.5" width="3.5" height="3.5" fill="#f0c000"/>
<rect x="8" y="14.5" width="3.5" height="3.5" fill="#f0c000"/><rect x="13" y="13.5" width="3.5" height="3.5" fill="#f0c000"/><rect x="12" y="19" width="3.5" height="3.5" fill="#f0c000"/></svg>
<svg class="a" style="left:1002px;top:52px;" width="30" height="26" viewBox="0 0 30 26">
<rect x="1" y="1" width="27" height="22" rx="2" fill="#262626"/>
<rect x="2.5" y="2.5" width="24" height="17.5" fill="#cacdd6"/>
<rect x="5" y="23" width="19" height="2" fill="#000"/>
<path d="M12.5 10 L8.5 6 M16.5 10 L20.5 6 M12.5 14 L8.5 18 M16.5 14 L20.5 18" stroke="#1040c0" stroke-width="1.6"/>
<polygon points="7,4 12,4 7,9" fill="#1040c0"/><polygon points="22,4 17,4 22,9" fill="#1040c0"/>
<polygon points="7,20 12,20 7,15" fill="#1040c0"/><polygon points="22,20 17,20 22,15" fill="#1040c0"/></svg>
<svg class="a" style="left:1048px;top:49px;" width="30" height="30" viewBox="0 0 30 30">
<polygon points="14,2 23.5,1 22.5,9.5 13,10" fill="#fafafa" stroke="#555" stroke-width="0.8"/>
<path d="M4 14 L21 9.5 L28 13 L28 22 L11 27 L4 22 Z" fill="#e4e4e4" stroke="#444" stroke-width="0.9"/>
<polygon points="4,14 21,9.5 28,13 11,18" fill="#f8f8f8"/>
<polygon points="21,19 28,14 28,22 22,25" fill="#3a3a3a"/>
<path d="M8 14 L19.5 11" stroke="#111" stroke-width="1.6"/>
<circle cx="19" cy="14.5" r="0.9" fill="#1a40a0"/>
<polygon points="2,25 15,21 19.5,25 6,29.5" fill="#fbfbfb" stroke="#333" stroke-width="0.9"/>
<path d="M5 29 L8 28" stroke="#3050d0" stroke-width="1"/></svg>
<svg class="a" style="left:1097px;top:51px;" width="28" height="26" viewBox="0 0 28 26">
<polygon points="2,16 19,1 27,6 11,21" fill="#d84a3a"/>
<polygon points="2,16 10.5,8.5 18.5,13.5 11,21" fill="#1a78e8"/>
<polygon points="2,16 11,21 11,25 2,20" fill="#7aa8e8"/>
<polygon points="11,21 27,6 27,10 11,25" fill="#2a2a3a"/>
<polygon points="11,21 18.5,13.5 18.5,17.5 11,25" fill="#1a3a90"/>
<path d="M2 18 L11 23" stroke="#fff" stroke-width="0.8"/></svg>
<svg class="a" style="left:1135px;top:52px;" width="25" height="25" viewBox="0 0 25 25">
<defs><linearGradient id="gi" x1="0" y1="0" x2="0" y2="1"><stop offset="0" stop-color="#4a7ad0"/><stop offset="1" stop-color="#123c90"/></linearGradient></defs>
<rect x="0.5" y="0.5" width="23" height="23" rx="3" fill="url(#gi)" stroke="#0a2a70"/>
<circle cx="12" cy="6" r="2.3" fill="#fff"/>
<path d="M8 10 H14 V18 H16 V20 H8 V18 H10 V12 H8 Z" fill="#fff"/></svg>
<svg class="a" style="left:1169px;top:50px;" width="30" height="28" viewBox="0 0 30 28">
<path d="M2 17 L16 3 L28 9 L14 23 Z" fill="#3a6ac0" stroke="#1a3a80" stroke-width="1"/>
<path d="M2 17 L14 23 L14 27 L2 21 Z" fill="#ccd4e4" stroke="#444" stroke-width="0.8"/>
<path d="M14 23 L28 9 L28 13 L14 27 Z" fill="#2a4a90" stroke="#1a3070" stroke-width="0.8"/>
<text x="10" y="18" font-size="14" font-weight="bold" font-family="Liberation Sans" fill="#fff" transform="rotate(-10 15 13)">?</text></svg>
<svg class="a" style="left:1207px;top:51px;" width="29" height="29" viewBox="0 0 29 29">
<path d="M6 3 Q14 0 22 3 L25 10 Q28 11 28 14 V19 H1 V14 Q1 11 4 10 Z" fill="#d01818"/>
<path d="M8 4.5 Q14 3 20 4.5 L22 9 H7 Z" fill="#f4c0c0"/>
<rect x="10" y="13" width="9" height="3" fill="#f4c0c0"/>
<circle cx="5" cy="14" r="1.6" fill="#fff"/><circle cx="24" cy="14" r="1.6" fill="#fff"/>
<rect x="1" y="20" width="27" height="2.5" fill="#d01818"/>
<rect x="13" y="22" width="2.5" height="7" fill="#d01818"/></svg>
<svg class="a" style="left:1245px;top:52px;" width="27" height="25" viewBox="0 0 27 25">
<defs><linearGradient id="gr1" x1="0" y1="0" x2="1" y2="1"><stop offset="0" stop-color="#fafafa"/><stop offset="1" stop-color="#9a9aa4"/></linearGradient></defs>
<ellipse cx="19" cy="12.5" rx="4.8" ry="11" fill="#303030"/>
<path d="M6 1.5 L19 1.5 L19 11 L13 12 L11.5 16 L1.5 10.5 L6 9 Z" fill="url(#gr1)" stroke="#666" stroke-width="0.6"/>
<path d="M4 17 L16 17 L18 24 L6 24 Q4 21 4 17 Z" fill="url(#gr1)" stroke="#666" stroke-width="0.6"/>
<rect x="15" y="10.5" width="10" height="8.5" fill="#fff" stroke="#1a1a1a" stroke-width="1.2"/>
<path d="M15.5 11 L20 15.5 L24.5 11" stroke="#1a1a1a" stroke-width="1.2" fill="none"/></svg>
<svg class="a" style="left:938px;top:123px;" width="29" height="26" viewBox="0 0 29 26">
<rect x="1.5" y="2.5" width="20" height="21" fill="#f2f4f8" stroke="#444" stroke-width="1"/>
<path d="M22 3 V24 H2" stroke="#222" stroke-width="1.3" fill="none"/>
<path d="M4 7 q2 -2 4 0 t4 0 t4 0 M4 13 q2 -2 4 0 t4 0 t4 0 M4 19 q2 -2 4 0 t4 0" stroke="#2a5ab0" stroke-width="1.2" fill="none"/>
<path d="M12 19 L24 4 L27 7 L15 22 L11 23 Z" fill="#111"/>
<path d="M12 19 L15 22 L11 23 Z" fill="#ddd"/></svg>
<svg class="a" style="left:986px;top:125px;" width="24" height="24" viewBox="0 0 24 24">
<path d="M1.5 8.5 H7 L10 14 L14 15 V22.5 H1.5 Z" fill="#c8d8f0" stroke="#2a3a70" stroke-width="1"/>
<path d="M2.5 20 H13" stroke="#6a8ad0" stroke-width="2"/>
<path d="M10 1.5 H22.5 V14 L19 13 L17 8 L11 6 Z" fill="#fff" stroke="#2a3a70" stroke-width="1"/>
<path d="M20 3 V12" stroke="#8aaae0" stroke-width="1.5"/></svg>
<svg class="a" style="left:1022px;top:124px;" width="27" height="25" viewBox="0 0 27 25">
<defs><radialGradient id="gs" cx="0.45" cy="0.4" r="0.6"><stop offset="0" stop-color="#fff8b0"/><stop offset="1" stop-color="#d8a800"/></radialGradient></defs>
<polygon points="13.5,1 16.8,9 25.5,9.5 18.8,15 21,23.5 13.5,18.8 6,23.5 8.2,15 1.5,9.5 10.2,9" fill="url(#gs)" stroke="#9a7a00" stroke-width="0.8"/></svg>
<svg class="a" style="left:1069px;top:125px;" width="28" height="23" viewBox="0 0 28 23">
<circle cx="9" cy="10" r="7.5" fill="#e8e8e8" stroke="#111" stroke-width="2"/>
<circle cx="7.5" cy="8.5" r="3" fill="#fff"/>
<path d="M14.5 15.5 L21 22" stroke="#111" stroke-width="3"/>
<path d="M15 16 L17 18" stroke="#d8a000" stroke-width="2"/>
<path d="M19 5 H26 M22.5 1.5 V8.5" stroke="#111" stroke-width="2"/></svg>
<svg class="a" style="left:1106px;top:125px;" width="28" height="23" viewBox="0 0 28 23">
<circle cx="9" cy="10" r="7.5" fill="#e8e8e8" stroke="#111" stroke-width="2"/>
<circle cx="7.5" cy="8.5" r="3" fill="#fff"/>
<path d="M14.5 15.5 L21 22" stroke="#111" stroke-width="3"/>
<path d="M15 16 L17 18" stroke="#d8a000" stroke-width="2"/>
<path d="M19 5 H26" stroke="#111" stroke-width="2"/></svg>
<svg class="a" style="left:1240px;top:124px;" width="29" height="24" viewBox="0 0 29 24">
<rect x="0.5" y="0.5" width="27" height="21" rx="2" fill="#666" stroke="#333"/>
<rect x="3" y="2" width="22" height="18" fill="#b8bcc8"/>
<path d="M7.5 2.5 H18 L21.5 6 V20.5 H7.5 Z" fill="#f4f4f4" stroke="#333"/>
<path d="M10 8 H19 M10 11 H19 M10 14 H19 M10 17 H19" stroke="#333" stroke-width="1"/>
<rect x="2" y="21.5" width="25" height="2" fill="#aaa"/></svg>
<svg class="a" style="left:191px;top:779px;" width="28" height="30" viewBox="0 0 28 30">
<path d="M6.5 1.5 H19 L23.5 6 V23.5 H6.5 Z" fill="#f6f6f6" stroke="#333"/>
<path d="M24 6 V24.5 H7" stroke="#111" stroke-width="1.6" fill="none"/>
<path d="M9 7 H19 M9 10 H21 M9 13 H21 M9 16 H21 M9 19 H21" stroke="#333" stroke-width="1"/>
<polygon points="6,17 7.5,22 13,23 7.5,24.5 6,29 4.5,24.5 0,23 4.5,22" fill="#fff" stroke="#ccc" stroke-width="0.5"/></svg>
<svg class="a" style="left:227px;top:778px;" width="32" height="30" viewBox="0 0 32 30">
<path d="M4.5 1.5 H17 L21.5 6 V20 H4.5 Z" fill="#f6f6f6" stroke="#333"/>
<path d="M22 6 V20" stroke="#111" stroke-width="1.6"/>
<path d="M7 6 H17 M7 9 H19 M7 12 H19 M7 15 H19" stroke="#333" stroke-width="1"/>
<path d="M1 12 L4 13 V27 L1 27 Z" fill="#e8d020"/>
<path d="M3 28 L9 18 H31 L25 28 Z" fill="#f0e040" stroke="#b0a020" stroke-width="0.7"/></svg>
<svg class="a" style="left:268px;top:780px;" width="26" height="26" viewBox="0 0 26 26">
<path d="M1.5 1.5 H10 L13.5 5 V16.5 H1.5 Z" fill="#f2f2f2" stroke="#bbb"/>
<path d="M3 6 H11 M3 9 H11 M3 12 H11" stroke="#ccc"/>
<path d="M10.5 8.5 H19 L22.5 12 V24.5 H10.5 Z" fill="#f2f2f2" stroke="#bbb"/>
<path d="M12 14 H21 M12 17 H21 M12 20 H21" stroke="#ccc"/></svg>
<svg class="a" style="left:306px;top:783px;" width="16" height="21" viewBox="0 0 16 21">
<rect x="1.5" y="1.5" width="16" height="18" rx="1" fill="#f0f0f0" stroke="#c0c0c0"/>
<rect x="5" y="2" width="8" height="6" fill="#d8d8d8"/>
<path d="M4 12 H16 M4 14.5 H16 M4 17 H16" stroke="#d0d0d0"/></svg>
<svg class="a" style="left:745px;top:778px;" width="30" height="31" viewBox="0 0 30 31">
<circle cx="11" cy="8" r="6" fill="#eee" stroke="#bbb" stroke-width="1.5"/>
<path d="M15 12 L26 23 M21 18 L18 21 M24 21 L22 23" stroke="#bbb" stroke-width="3"/>
<path d="M8 16 V29 M2 23 H14" stroke="#ddd" stroke-width="4"/></svg>
<svg class="a" style="left:783px;top:779px;" width="26" height="30" viewBox="0 0 26 30">
<path d="M6.5 1.5 H18 L22.5 6 V24.5 H6.5 Z" fill="#f6f6f6" stroke="#333"/>
<path d="M23 6 V25.5 H8" stroke="#111" stroke-width="1.6" fill="none"/>
<path d="M9 7 H18 M9 10 H20 M9 13 H20 M9 16 H20 M9 19 H20" stroke="#333" stroke-width="1"/>
<path d="M6 17 V29 M0 23 H12" stroke="#10c020" stroke-width="3.5"/></svg>
<svg class="a" style="left:820px;top:779px;" width="27" height="30" viewBox="0 0 27 30">
<path d="M6.5 1.5 H18 L22.5 6 V24.5 H6.5 Z" fill="#eee" stroke="#bbb"/>
<path d="M9 7 H18 M9 10 H20 M9 13 H20" stroke="#ccc" stroke-width="1"/>
<path d="M1 24 L12 16 L17 19 L6 28 Z" fill="#bbb" stroke="#aaa"/></svg>
<svg class="a" style="left:858px;top:779px;" width="28" height="26" viewBox="0 0 28 26">
<path d="M1 18 L16 4 L26 9 L11 23 Z" fill="#c8c8c8" stroke="#aaa"/>
<path d="M1 18 L11 23 L11 25 L1 20 Z" fill="#ddd"/>
<path d="M11 23 L26 9 L26 11 L11 25 Z" fill="#aaa"/></svg>
<svg class="a" style="left:912px;top:780px;" width="24" height="26" viewBox="0 0 24 26">
<rect x="1" y="2" width="8" height="9" fill="#bbb" stroke="#999"/>
<rect x="3" y="11" width="4" height="5" fill="#aaa"/>
<rect x="9" y="14" width="9" height="9" fill="#bbb" stroke="#999"/>
<path d="M5 16 V19 H9" stroke="#999" stroke-width="2" fill="none"/>
<path d="M13 5 L16 9 L22 1" stroke="#999" stroke-width="2" fill="none"/></svg>
<svg class="a" style="left:1146px;top:779px;" width="24" height="29" viewBox="0 0 24 29">
<path d="M3.5 1.5 H16 L20.5 6 V22.5 H3.5 Z" fill="#eee" stroke="#c0c0c0"/>
<path d="M6 7 H17 M6 10 H17 M6 13 H17" stroke="#ccc"/>
<path d="M7 14 H15 V20 H19 L11 28 L3 20 H7 Z" fill="#c8c8c8" stroke="#aaa"/></svg>
<svg class="a" style="left:453px;top:108px;z-index:10;" width="16" height="24" viewBox="0 0 16 24">
<path d="M1.5 1.5 L1.5 18 L5.5 14 L9 21.5 L11 20.5 L7.5 13 L13 13 Z" fill="#fff" stroke="#000" stroke-width="1" stroke-linejoin="miter"/></svg>
<div class="a" style="left:321px;top:113px;width:276px;height:690px;background:#d4d0c8;"></div>
<div class="a" style="left:321px;top:113px;width:276px;height:1px;background:#fff;"></div>
<div class="a" style="left:321px;top:113px;width:1px;height:690px;background:#fff;"></div>
<div class="a" style="left:321px;top:802px;width:276px;height:1px;background:#404040;"></div>
<div class="a" style="left:596px;top:113px;width:1px;height:690px;background:#404040;"></div>
<div class="a" style="left:322px;top:801px;width:274px;height:1px;background:#808080;"></div>
<div class="a" style="left:595px;top:114px;width:1px;height:688px;background:#808080;"></div>
<div class="a" style="left:323px;top:115px;width:271px;height:21px;background:#fff;"></div>
<div class="a" style="left:323px;top:115px;width:271px;height:1px;background:#808080;"></div>
<div class="a" style="left:323px;top:115px;width:1px;height:21px;background:#808080;"></div>
<div class="a" style="left:323px;top:135px;width:271px;height:1px;background:#fff;"></div>
<div class="a" style="left:593px;top:115px;width:1px;height:21px;background:#fff;"></div>
<div class="a" style="left:324px;top:116px;width:269px;height:1px;background:#404040;"></div>
<div class="a" style="left:324px;top:116px;width:1px;height:19px;background:#404040;"></div>
<div class="a" style="left:324px;top:134px;width:269px;height:1px;background:#d4d0c8;"></div>
<div class="a" style="left:592px;top:116px;width:1px;height:19px;background:#d4d0c8;"></div>
<div class="a" style="left:323px;top:136px;width:271px;height:665px;background:#d4d0c8;"></div>
<div class="a" style="left:323px;top:136px;width:271px;height:1px;background:#808080;"></div>
<div class="a" style="left:323px;top:136px;width:1px;height:665px;background:#808080;"></div>
<div class="a" style="left:324px;top:137px;width:269px;height:1px;background:#404040;"></div>
<div class="a" style="left:324px;top:137px;width:1px;height:663px;background:#404040;"></div>
<div class="a" style="left:323px;top:799px;width:271px;height:1px;background:#fff;"></div>
<div class="a" style="left:593px;top:136px;width:1px;height:664px;background:#fff;"></div>
<div class="a" style="left:325px;top:138px;width:108px;height:15px;background:#808080;"></div>
<div class="t" style="left:331px;top:141px;font-size:11px;color:#000;transform:scaleX(0.9602);">Maj. assy M  - Engine</div>
<div class="t" style="left:331px;top:156px;font-size:11px;color:#000;">Maj. assy GA - Automatic transmission</div>
<div class="t" style="left:331px;top:171px;font-size:11px;color:#000;transform:scaleX(0.9543);">21 MAJOR ASSEMBLY DETACHABLE BODY COMP.</div>
<div class="t" style="left:331px;top:186px;font-size:11px;color:#000;transform:scaleX(0.9150);">24 ENGINE SUSPENSION</div>
<div class="t" style="left:331px;top:201px;font-size:11px;color:#000;transform:scaleX(0.9150);">25 CLUTCH</div>
<div class="t" style="left:331px;top:216px;font-size:11px;color:#000;transform:scaleX(0.9150);">26 GEARSHIFT MECHANISM</div>
<div class="t" style="left:331px;top:231px;font-size:11px;color:#000;transform:scaleX(0.9185);">27 MERCEDES-BENZ AUTOMATIC TRANSMISSION</div>
<div class="t" style="left:331px;top:246px;font-size:11px;color:#000;transform:scaleX(0.9150);">29 PEDAL ASSEMBLY</div>
<div class="t" style="left:331px;top:261px;font-size:11px;color:#000;transform:scaleX(0.9150);">30 CONTROL</div>
<div class="t" style="left:331px;top:276px;font-size:11px;color:#000;transform:scaleX(0.9150);">31 HITCHING MECHANISM</div>
<div class="t" style="left:331px;top:291px;font-size:11px;color:#000;transform:scaleX(0.9216);">32 SPRINGS, SUSPENSION AND HYDRAULIC SYSTEM</div>
<div class="t" style="left:331px;top:306px;font-size:11px;color:#000;transform:scaleX(0.9150);">33 FRONT AXLE</div>
<div class="t" style="left:331px;top:321px;font-size:11px;color:#000;transform:scaleX(0.9150);">35 REAR AXLE</div>
<div class="t" style="left:331px;top:336px;font-size:11px;color:#000;transform:scaleX(0.9150);">40 WHEELS</div>
<div class="t" style="left:331px;top:351px;font-size:11px;color:#000;transform:scaleX(0.9150);">41 PROPELLER SHAFT</div>
<div class="t" style="left:331px;top:366px;font-size:11px;color:#000;transform:scaleX(0.9150);">42 BRAKES</div>
<div class="t" style="left:331px;top:381px;font-size:11px;color:#000;transform:scaleX(0.9150);">46 STEERING</div>
<div class="t" style="left:331px;top:396px;font-size:11px;color:#000;transform:scaleX(0.9150);">47 FUEL SYSTEM</div>
<div class="t" style="left:331px;top:411px;font-size:11px;color:#000;transform:scaleX(0.9150);">49 EXHAUST SYSTEM</div>
<div class="t" style="left:331px;top:426px;font-size:11px;color:#000;transform:scaleX(0.9150);">50 RADIATOR</div>
<div class="t" style="left:331px;top:441px;font-size:11px;color:#000;transform:scaleX(0.9150);">52 CHASSIS SHEET METAL / AIR INTAKE</div>
<div class="t" style="left:331px;top:456px;font-size:11px;color:#000;transform:scaleX(0.9150);">54 ELECTRICAL EQUIPMENT AND INSTRUMENTS</div>
<div class="t" style="left:331px;top:471px;font-size:11px;color:#000;transform:scaleX(0.9150);">58 TOOLS AND ACCESSORIES</div>
<div class="t" style="left:331px;top:486px;font-size:11px;color:#000;transform:scaleX(0.9150);">60 SHELL</div>
<div class="t" style="left:331px;top:501px;font-size:11px;color:#000;transform:scaleX(0.9150);">61 SUBSTRUCTURE</div>
<div class="t" style="left:331px;top:516px;font-size:11px;color:#000;transform:scaleX(0.9150);">62 FRONT END, FRONT WALL</div>
<div class="t" style="left:331px;top:531px;font-size:11px;color:#000;transform:scaleX(0.9150);">63 SIDE PANELS</div>
<div class="t" style="left:331px;top:546px;font-size:11px;color:#000;transform:scaleX(0.9150);">64 REAR END</div>
<div class="t" style="left:331px;top:561px;font-size:11px;color:#000;transform:scaleX(0.9150);">65 ROOF</div>
<div class="t" style="left:331px;top:576px;font-size:11px;color:#000;transform:scaleX(0.9150);">67 WINDOWS</div>
<div class="t" style="left:331px;top:591px;font-size:11px;color:#000;transform:scaleX(0.9150);">68 PANELLING</div>
<div class="t" style="left:331px;top:606px;font-size:11px;color:#000;transform:scaleX(0.9150);">69 PANELLING AND LINING</div>
<div class="t" style="left:331px;top:621px;font-size:11px;color:#000;transform:scaleX(0.9150);">72 FRONT DOORS</div>
<div class="t" style="left:331px;top:636px;font-size:11px;color:#000;transform:scaleX(0.9150);">73 REAR DOORS</div>
<div class="t" style="left:331px;top:651px;font-size:11px;color:#000;transform:scaleX(0.9150);">75 REAR LID</div>
<div class="t" style="left:331px;top:666px;font-size:11px;color:#000;transform:scaleX(0.9150);">78 SLIDING ROOF</div>
<div class="t" style="left:331px;top:681px;font-size:11px;color:#000;transform:scaleX(0.9150);">80 VACUUM SYSTEM</div>
<div class="t" style="left:331px;top:696px;font-size:11px;color:#000;transform:scaleX(0.9150);">82 ELECTRICAL SYSTEM</div>
<div class="t" style="left:331px;top:711px;font-size:11px;color:#000;transform:scaleX(0.9150);">83 HEATING AND VENTILATION</div>
<div class="t" style="left:331px;top:726px;font-size:11px;color:#000;transform:scaleX(0.9150);">86 WASHER SYSTEM</div>
<div class="t" style="left:331px;top:741px;font-size:11px;color:#000;transform:scaleX(0.9150);">88 ATTACHMENT PARTS</div>
<div class="t" style="left:331px;top:756px;font-size:11px;color:#000;transform:scaleX(0.9150);">91 DRIVER'S SEAT</div>
<div class="t" style="left:331px;top:771px;font-size:11px;color:#000;transform:scaleX(0.9150);">92 REAR SEAT BENCH</div>
<div class="t" style="left:331px;top:786px;font-size:11px;color:#000;transform:scaleX(0.9150);">99 SPECIAL INTERNAL FITTINGS</div>
</body></html>
